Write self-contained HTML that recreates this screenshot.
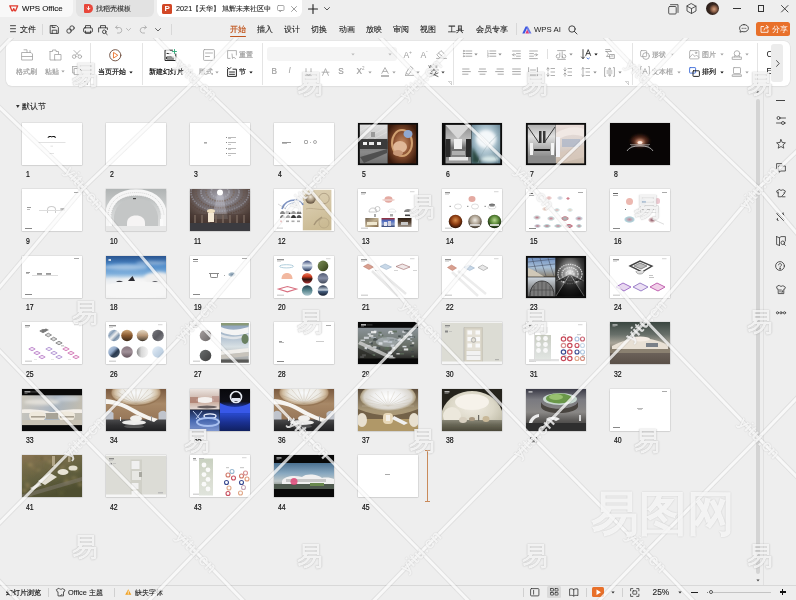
<!DOCTYPE html><html><head><meta charset="utf-8"><style>
*{margin:0;padding:0;box-sizing:border-box}
html,body{width:796px;height:600px;overflow:hidden;background:#eeeeee;font-family:"Liberation Sans",sans-serif;color:#222}
.a{position:absolute}
.t{position:absolute;white-space:nowrap;line-height:1}
.k{-webkit-text-stroke:0.2px currentColor}
.k1{-webkit-text-stroke:0.1px currentColor}
svg{position:absolute;overflow:visible}
.s{position:absolute;width:60px;height:42px;background:#fff;box-shadow:0 0 0 .5px rgba(0,0,0,.10),0 .5px 1.5px rgba(0,0,0,.18);overflow:hidden}
.n{position:absolute;font-size:8.2px;line-height:1;color:#111;-webkit-text-stroke:0.2px #111;transform:scaleX(.84);transform-origin:0 0}
.g{color:#9a9a9a}
</style></head><body><div class="a" style="left:0;top:0;width:796px;height:600px;will-change:transform;overflow:hidden"><div class="a" style="left:0px;top:0px;width:73px;height:17px;background:#f8f8f8;border-radius:0 0 6px 0"></div><div class="a" style="left:76px;top:0px;width:78px;height:17px;background:#e2e2e2;border-radius:0 0 6px 6px"></div><div class="a" style="left:157px;top:0px;width:145px;height:17px;background:#ffffff;border-radius:0 0 6px 6px"></div><svg style="left:8.5px;top:5px" width="9.5" height="6.5" viewBox="0 0 9.5 6.5" fill="none" stroke="#e03a2e" stroke-width="0.9" stroke-linecap="round" stroke-linejoin="round"><path d="M0.8 0.8 H8.7 L6.6 5.8 H5.7 L4.75 3.6 L3.8 5.8 H2.9 Z" stroke="#e03a2e" stroke-width="1.3" fill="none"/></svg><div class="t k1" style="left:22px;top:4.9px;font-size:7.9px;color:#111;">WPS Office</div><div class="a" style="left:84px;top:4px;width:8.5px;height:9px;background:#e8463a;border-radius:1px 4.5px 4.5px 1px"></div><svg style="left:85.5px;top:6px" width="5" height="5" viewBox="0 0 5 5" fill="none" stroke="#fff" stroke-width="0.9" stroke-linecap="round" stroke-linejoin="round"><path d="M2.5 0.5 V3.5 M1 2.2 L2.5 3.7 L4 2.2" /></svg><div class="t k1" style="left:96.4px;top:5.2px;font-size:7.3px;color:#333;">找稻壳模板</div><div class="a" style="left:162px;top:4px;width:10px;height:10px;background:#d24726;border-radius:1.5px"></div><div class="t " style="left:164.5px;top:5px;font-size:8px;color:#fff;font-weight:bold">P</div><div class="t k1" style="left:176px;top:5.0px;font-size:7.3px;color:#222;">2021【天华】 旭辉未来社区中</div><div class="a" style="left:270px;top:3px;width:12px;height:12px;background:linear-gradient(90deg,rgba(255,255,255,0),#fff 40%)"></div><svg style="left:277px;top:5.2px" width="8" height="7" viewBox="0 0 8 7" fill="none" stroke="#888" stroke-width="0.7" stroke-linecap="round" stroke-linejoin="round"><rect x="0.5" y="0.5" width="6.5" height="5" rx="1"/><path d="M2.5 5.5 L3 6.8 L4.5 5.5"/></svg><svg style="left:290.5px;top:5.8px" width="6" height="6" viewBox="0 0 6 6" fill="none" stroke="#888" stroke-width="0.8" stroke-linecap="round" stroke-linejoin="round"><path d="M0.5 0.5 L5.5 5.5 M5.5 0.5 L0.5 5.5"/></svg><svg style="left:308px;top:3.5px" width="10" height="10" viewBox="0 0 10 10" fill="none" stroke="#222" stroke-width="1.1" stroke-linecap="round" stroke-linejoin="round"><path d="M5 0.5 V9.5 M0.5 5 H9.5"/></svg><svg style="left:324px;top:7px" width="6" height="4" viewBox="0 0 6 4" fill="none" stroke="#444" stroke-width="0.9" stroke-linecap="round" stroke-linejoin="round"><path d="M0.5 0.5 L3 3 L5.5 0.5"/></svg><svg style="left:667.5px;top:3.5px" width="11" height="11" viewBox="0 0 11 11" fill="none" stroke="#444" stroke-width="0.9" stroke-linecap="round" stroke-linejoin="round"><rect x="0.7" y="2.5" width="7.5" height="7.5" rx="1"/><path d="M2.5 0.7 H10 V8.5"/></svg><svg style="left:686px;top:3px" width="11" height="11" viewBox="0 0 11 11" fill="none" stroke="#444" stroke-width="0.9" stroke-linecap="round" stroke-linejoin="round"><path d="M5.5 0.7 L10 3.2 V8 L5.5 10.5 L1 8 V3.2 Z M1 3.2 L5.5 5.6 L10 3.2 M5.5 5.6 V10.5"/></svg><div class="a" style="left:705.8px;top:2.2px;width:13.2px;height:13.2px;border-radius:50%;background:radial-gradient(circle at 62% 55%,#d0a080 0,#9a6a50 22%,#3a2820 45%,#241a16 80%)"></div><div class="a" style="left:733px;top:7.6px;width:7.5px;height:0.9px;background:#333"></div><div class="a" style="left:757.8px;top:5px;width:6.5px;height:6.5px;border:0.9px solid #333"></div><svg style="left:781.2px;top:4.8px" width="7.5" height="7.5" viewBox="0 0 7.5 7.5" fill="none" stroke="#333" stroke-width="0.9" stroke-linecap="round" stroke-linejoin="round"><path d="M0.5 0.5 L7 7 M7 0.5 L0.5 7"/></svg><svg style="left:10px;top:25px" width="6" height="8" viewBox="0 0 6 8" fill="none" stroke="#333" stroke-width="0.9" stroke-linecap="round" stroke-linejoin="round"><path d="M0.5 0.7 H5.5 M0.5 3.7 H5.5 M0.5 6.7 H5.5"/></svg><div class="t k1" style="left:20px;top:25.8px;font-size:7.5px;color:#222;">文件</div><div class="a" style="left:42px;top:24px;width:1px;height:11px;background:#d8d8d8"></div><svg style="left:50px;top:25px" width="9" height="9" viewBox="0 0 9 9" fill="none" stroke="#333" stroke-width="0.85" stroke-linecap="round" stroke-linejoin="round"><path d="M0.6 0.6 H6.5 L8.4 2.5 V8.4 H0.6 Z M2.2 8.4 V5.2 H6.8 V8.4 M2.2 0.6 V2.5 H5"/></svg><svg style="left:66px;top:25px" width="9" height="9" viewBox="0 0 9 9" fill="none" stroke="#333" stroke-width="0.85" stroke-linecap="round" stroke-linejoin="round"><circle cx="6" cy="3" r="2.2"/><circle cx="3" cy="6" r="2.2"/></svg><svg style="left:83px;top:25px" width="10" height="9" viewBox="0 0 10 9" fill="none" stroke="#333" stroke-width="0.85" stroke-linecap="round" stroke-linejoin="round"><rect x="0.6" y="2.8" width="8.8" height="4.5" rx="1.2"/><path d="M2.5 2.8 V0.6 H7.5 V2.8 M2.5 6 V8.4 H7.5 V6"/></svg><svg style="left:98px;top:25px" width="10" height="10" viewBox="0 0 10 10" fill="none" stroke="#333" stroke-width="0.85" stroke-linecap="round" stroke-linejoin="round"><path d="M2.5 2.8 V0.6 H7.5 V2.8 M0.6 7 V2.8 H9.4 V4.5"/><circle cx="6.3" cy="6.8" r="1.8"/><path d="M7.6 8.1 L9.2 9.6"/></svg><svg style="left:115px;top:25px" width="8" height="9" viewBox="0 0 8 9" fill="none" stroke="#aaa" stroke-width="0.85" stroke-linecap="round" stroke-linejoin="round"><path d="M2 0.8 L0.6 2.5 L2.5 3.8 M0.8 2.5 H4.5 A2.8 2.8 0 0 1 4.5 8 H2.5"/></svg><svg style="left:126px;top:28px" width="5" height="3" viewBox="0 0 5 3" fill="none" stroke="#aaa" stroke-width="0.8" stroke-linecap="round" stroke-linejoin="round"><path d="M0.5 0.5 L2.5 2.5 L4.5 0.5"/></svg><svg style="left:139px;top:25px" width="8" height="9" viewBox="0 0 8 9" fill="none" stroke="#aaa" stroke-width="0.85" stroke-linecap="round" stroke-linejoin="round"><path d="M6 0.8 L7.4 2.5 L5.5 3.8 M7.2 2.5 H3.5 A2.8 2.8 0 0 0 3.5 8 H5.5"/></svg><svg style="left:155px;top:28px" width="6" height="4" viewBox="0 0 6 4" fill="none" stroke="#555" stroke-width="0.9" stroke-linecap="round" stroke-linejoin="round"><path d="M0.5 0.5 L3 3 L5.5 0.5"/></svg><div class="a" style="left:170.5px;top:24px;width:0.8px;height:11px;background:#d8d8d8"></div><div class="t k" style="left:229.5px;top:26.2px;font-size:7.8px;color:#c0561f;">开始</div><div class="t k1" style="left:257px;top:26.2px;font-size:7.8px;color:#222;">插入</div><div class="t k1" style="left:284px;top:26.2px;font-size:7.8px;color:#222;">设计</div><div class="t k1" style="left:311px;top:26.2px;font-size:7.8px;color:#222;">切换</div><div class="t k1" style="left:338.6px;top:26.2px;font-size:7.8px;color:#222;">动画</div><div class="t k1" style="left:366px;top:26.2px;font-size:7.8px;color:#222;">放映</div><div class="t k1" style="left:393px;top:26.2px;font-size:7.8px;color:#222;">审阅</div><div class="t k1" style="left:420px;top:26.2px;font-size:7.8px;color:#222;">视图</div><div class="t k1" style="left:448px;top:26.2px;font-size:7.8px;color:#222;">工具</div><div class="t k1" style="left:476px;top:26.2px;font-size:7.8px;color:#222;">会员专享</div><div class="a" style="left:229.5px;top:36px;width:16px;height:1.3px;background:#c0561f;border-radius:1px"></div><div class="a" style="left:516px;top:23px;width:1px;height:12px;background:#d8d8d8"></div><svg style="left:522px;top:25.8px" width="10" height="8" viewBox="0 0 10 8" fill="none" stroke="none" stroke-width="0.9" stroke-linecap="round" stroke-linejoin="round"><path d="M0.3 7.6 L3.6 0.4 H5.8 L2.6 7.6 Z" fill="#3a56e0" stroke="none"/><path d="M5.2 3.6 L7.2 7.6 H3.4 Z" fill="#e03a78" stroke="none"/><path d="M5.8 0.4 L9.5 7.6 H7.4 L4.6 2.3 Z" fill="#5a6ae8" stroke="none" opacity=".9"/></svg><div class="t " style="left:534px;top:26.0px;font-size:7.8px;color:#222;">WPS AI</div><svg style="left:568px;top:25px" width="10" height="10" viewBox="0 0 10 10" fill="none" stroke="#333" stroke-width="0.9" stroke-linecap="round" stroke-linejoin="round"><circle cx="4" cy="4" r="3.2"/><path d="M6.3 6.3 L9 9"/></svg><svg style="left:739px;top:24.2px" width="10" height="8.5" viewBox="0 0 10 8.5" fill="none" stroke="#333" stroke-width="0.85" stroke-linecap="round" stroke-linejoin="round"><path d="M5 0.6 C7.6 0.6 9.4 2.2 9.4 4.2 C9.4 6.2 7.6 7.8 5 7.8 C4.3 7.8 3.6 7.7 3 7.5 L1 8.2 L1.4 6.6 C0.9 6 0.6 5.1 0.6 4.2 C0.6 2.2 2.4 0.6 5 0.6 Z"/><circle cx="3.2" cy="4.2" r=".55" fill="#333" stroke="none"/><circle cx="5" cy="4.2" r=".55" fill="#333" stroke="none"/><circle cx="6.8" cy="4.2" r=".55" fill="#333" stroke="none"/></svg><div class="a" style="left:755.5px;top:22px;width:34px;height:14px;background:#e8702a;border-radius:2.5px"></div><svg style="left:760px;top:25px" width="9" height="8" viewBox="0 0 9 8" fill="none" stroke="#fff" stroke-width="0.85" stroke-linecap="round" stroke-linejoin="round"><path d="M3.5 1.5 H1 V7.3 H8 V5 M4 5 C4.5 3 6 2 8 2 M6.5 0.5 L8.3 2 L6.8 3.8"/></svg><div class="t " style="left:771.5px;top:25.5px;font-size:7.6px;color:#fff;">分享</div><div class="a" style="left:5.5px;top:40.5px;width:784px;height:45.5px;background:#fff;border-radius:6px;box-shadow:0 0 0 .6px #dedede,0 1px 1.5px rgba(0,0,0,.06)"></div><svg style="left:21px;top:49px" width="13" height="12" viewBox="0 0 13 12" fill="none" stroke="#a0a0a0" stroke-width="0.8" stroke-linecap="round" stroke-linejoin="round"><path d="M3 0.8 H6 V3.5 M1 3.5 H10 L11.5 5 V11 H1 Z M9 3.5 V1.5"/><path d="M1 7.5 H11.5"/></svg><div class="t k" style="left:16.3px;top:68.3px;font-size:7.2px;color:#a0a0a0;">格式刷</div><svg style="left:49px;top:49px" width="13" height="12" viewBox="0 0 13 12" fill="none" stroke="#a0a0a0" stroke-width="0.8" stroke-linecap="round" stroke-linejoin="round"><path d="M1 2.5 H3.5 V1 H7 V2.5 H9.5 V5 M1 2.5 V11 H6 M6 5.5 H12 V11 H6 Z"/></svg><div class="t k" style="left:45px;top:68.3px;font-size:7.2px;color:#a0a0a0;">粘贴</div><svg style="left:61.3px;top:70.3px" width="4" height="3" viewBox="0 0 4 3" fill="none" stroke="none" stroke-width="0.9" stroke-linecap="round" stroke-linejoin="round"><path d="M0.3 0.5 H3.7 L2 2.5 Z" fill="#a0a0a0" stroke="none"/></svg><svg style="left:72px;top:50px" width="10" height="9" viewBox="0 0 10 9" fill="none" stroke="#a0a0a0" stroke-width="0.8" stroke-linecap="round" stroke-linejoin="round"><circle cx="2.2" cy="6.6" r="1.8"/><circle cx="7.8" cy="6.6" r="1.8"/><path d="M3.3 5.2 L8 0.5 M6.7 5.2 L2 0.5"/></svg><svg style="left:72px;top:66px" width="10" height="9" viewBox="0 0 10 9" fill="none" stroke="#a0a0a0" stroke-width="0.8" stroke-linecap="round" stroke-linejoin="round"><path d="M0.6 0.6 H6 V2.5 M0.6 0.6 V7 H2.5 M2.5 2.5 H7.5 L9.4 4.4 V8.6 H2.5 Z"/></svg><svg style="left:84px;top:80.5px" width="4" height="4" viewBox="0 0 4 4" fill="none" stroke="#aaa" stroke-width="0.5" stroke-linecap="round" stroke-linejoin="round"><path d="M0.5 0.5 H3.5 V3.5 M3.5 3.5 L1 1"/></svg><div class="a" style="left:89.5px;top:43px;width:0.8px;height:42px;background:#e4e4e4"></div><svg style="left:109px;top:48.5px" width="12.5" height="12.5" viewBox="0 0 12.5 12.5" fill="none" stroke="#6a4a3a" stroke-width="0.9" stroke-linecap="round" stroke-linejoin="round"><circle cx="6.25" cy="6.25" r="5.6" stroke="#6a4a3a"/><path d="M4.8 3.6 L8.8 6.25 L4.8 8.9 Z" stroke="#e8702a"/></svg><div class="t k" style="left:98px;top:68.3px;font-size:7.2px;color:#111;">当页开始</div><svg style="left:128.5px;top:70.5px" width="4" height="3" viewBox="0 0 4 3" fill="none" stroke="none" stroke-width="0.9" stroke-linecap="round" stroke-linejoin="round"><path d="M0.3 0.5 H3.7 L2 2.5 Z" fill="#111" stroke="none"/></svg><div class="a" style="left:141.7px;top:43px;width:0.8px;height:42px;background:#e4e4e4"></div><svg style="left:164px;top:48.5px" width="13" height="12.5" viewBox="0 0 13 12.5" fill="none" stroke="#111" stroke-width="0.9" stroke-linecap="round" stroke-linejoin="round"><path d="M8.5 1.2 H1 V11.5 H11.8 V5"/><path d="M3 4.5 H7 M3 8 H9.8 V10 H3 Z"/><path d="M10.5 0.5 V4.5 M8.5 2.5 H12.5" stroke="#2aa876"/></svg><div class="t k" style="left:148.7px;top:68.3px;font-size:7.2px;color:#111;">新建幻灯片</div><svg style="left:188.0px;top:70.5px" width="4" height="3" viewBox="0 0 4 3" fill="none" stroke="none" stroke-width="0.9" stroke-linecap="round" stroke-linejoin="round"><path d="M0.3 0.5 H3.7 L2 2.5 Z" fill="#111" stroke="none"/></svg><svg style="left:203px;top:49px" width="12" height="12" viewBox="0 0 12 12" fill="none" stroke="#a0a0a0" stroke-width="0.8" stroke-linecap="round" stroke-linejoin="round"><rect x="0.6" y="0.6" width="10.8" height="10.8" rx="0.8"/><path d="M2.5 4 H9.5 M2.5 7.5 H6.5"/></svg><div class="t k" style="left:198.9px;top:68.3px;font-size:7.2px;color:#a0a0a0;">版式</div><svg style="left:215.3px;top:70.5px" width="4" height="3" viewBox="0 0 4 3" fill="none" stroke="none" stroke-width="0.9" stroke-linecap="round" stroke-linejoin="round"><path d="M0.3 0.5 H3.7 L2 2.5 Z" fill="#a0a0a0" stroke="none"/></svg><svg style="left:227px;top:50px" width="10" height="9" viewBox="0 0 10 9" fill="none" stroke="#a0a0a0" stroke-width="0.8" stroke-linecap="round" stroke-linejoin="round"><path d="M3 8.4 H0.6 V0.6 H9.4 V5 M5 4 L5.5 8.5 L6.8 7 L8.5 8.7"/></svg><div class="t k" style="left:239.3px;top:50.8px;font-size:7.2px;color:#a0a0a0;">重置</div><svg style="left:227px;top:66.5px" width="10" height="10" viewBox="0 0 10 10" fill="none" stroke="#111" stroke-width="0.9" stroke-linecap="round" stroke-linejoin="round"><path d="M0.6 0.6 L2.2 2.2 L3.8 0.6 M0.6 2.2 V9.4 H9.4 V2.2 H6 M2.5 5 H7.5 M2.5 7.3 H7.5"/></svg><div class="t k" style="left:239.3px;top:68.3px;font-size:7.2px;color:#111;">节</div><svg style="left:248.5px;top:70.5px" width="4" height="3" viewBox="0 0 4 3" fill="none" stroke="none" stroke-width="0.9" stroke-linecap="round" stroke-linejoin="round"><path d="M0.3 0.5 H3.7 L2 2.5 Z" fill="#111" stroke="none"/></svg><div class="a" style="left:262.2px;top:43px;width:0.8px;height:42px;background:#e4e4e4"></div><div class="a" style="left:267px;top:47px;width:92.5px;height:14px;background:#f4f4f4;border-radius:3px 0 0 3px"></div><div class="a" style="left:360px;top:47px;width:37px;height:14px;background:#f4f4f4;border-radius:0 3px 3px 0"></div><svg style="left:351.3px;top:53.3px" width="4" height="3" viewBox="0 0 4 3" fill="none" stroke="none" stroke-width="0.9" stroke-linecap="round" stroke-linejoin="round"><path d="M0.3 0.5 H3.7 L2 2.5 Z" fill="#bbb" stroke="none"/></svg><svg style="left:388.0px;top:53.3px" width="4" height="3" viewBox="0 0 4 3" fill="none" stroke="none" stroke-width="0.9" stroke-linecap="round" stroke-linejoin="round"><path d="M0.3 0.5 H3.7 L2 2.5 Z" fill="#bbb" stroke="none"/></svg><div class="t k" style="left:271.5px;top:68.3px;font-size:8.2px;color:#a0a0a0;">B</div><div class="t " style="left:288.5px;top:67.3px;font-size:8.2px;color:#a0a0a0;font-style:italic;font-family:"Liberation Serif",serif">I</div><svg style="left:305px;top:67.5px" width="7" height="9" viewBox="0 0 7 9" fill="none" stroke="#a0a0a0" stroke-width="0.8" stroke-linecap="round" stroke-linejoin="round"><path d="M1 0.6 V4.5 A2.5 2.5 0 0 0 6 4.5 V0.6 M0.6 8 H6.4"/></svg><svg style="left:321.5px;top:67.5px" width="7" height="8" viewBox="0 0 7 8" fill="none" stroke="#a0a0a0" stroke-width="0.8" stroke-linecap="round" stroke-linejoin="round"><path d="M0.6 7.4 L3.5 0.6 L6.4 7.4 M0 4.2 H7"/></svg><div class="t k" style="left:338.3px;top:68.3px;font-size:8.2px;color:#a0a0a0;">S</div><div class="t k" style="left:356.4px;top:68.3px;font-size:8.2px;color:#a0a0a0;">X</div><div class="t " style="left:362px;top:66.5px;font-size:4.5px;color:#a0a0a0;">2</div><svg style="left:368.3px;top:70.5px" width="4" height="3" viewBox="0 0 4 3" fill="none" stroke="none" stroke-width="0.9" stroke-linecap="round" stroke-linejoin="round"><path d="M0.3 0.5 H3.7 L2 2.5 Z" fill="#a0a0a0" stroke="none"/></svg><svg style="left:381px;top:67px" width="8" height="10" viewBox="0 0 8 10" fill="none" stroke="#a0a0a0" stroke-width="0.8" stroke-linecap="round" stroke-linejoin="round"><path d="M0.8 6.4 L4 0.6 L7.2 6.4 M2 4.4 H6"/></svg><div class="a" style="left:380.5px;top:74.5px;width:8.5px;height:2px;background:#b8b8b8"></div><svg style="left:392.0px;top:70.5px" width="4" height="3" viewBox="0 0 4 3" fill="none" stroke="none" stroke-width="0.9" stroke-linecap="round" stroke-linejoin="round"><path d="M0.3 0.5 H3.7 L2 2.5 Z" fill="#a0a0a0" stroke="none"/></svg><div class="t " style="left:403.5px;top:50.8px;font-size:8.6px;color:#a0a0a0;">A</div><div class="t " style="left:409px;top:49.5px;font-size:5px;color:#a0a0a0;">+</div><div class="t " style="left:420.5px;top:50.8px;font-size:8.6px;color:#a0a0a0;">A</div><div class="t " style="left:426px;top:48.5px;font-size:5px;color:#a0a0a0;">-</div><svg style="left:436px;top:50px" width="11" height="9" viewBox="0 0 11 9" fill="none" stroke="#a0a0a0" stroke-width="0.8" stroke-linecap="round" stroke-linejoin="round"><path d="M3.5 7.5 L0.8 4.8 L5 0.6 L9.5 5 L7 7.5 Z M2.6 3.2 L7.3 7.3 M0.5 8.4 H10.5"/></svg><svg style="left:404.5px;top:66px" width="9" height="10" viewBox="0 0 9 10" fill="none" stroke="#a0a0a0" stroke-width="0.8" stroke-linecap="round" stroke-linejoin="round"><path d="M1 7 L4 2 L7 4 L4 8 Z M4 2 L5.5 0.5 L8 2.5 L7 4 M0.6 9.4 H8.4 M0.6 8.5 V9.4"/></svg><svg style="left:416.0px;top:70.5px" width="4" height="3" viewBox="0 0 4 3" fill="none" stroke="none" stroke-width="0.9" stroke-linecap="round" stroke-linejoin="round"><path d="M0.3 0.5 H3.7 L2 2.5 Z" fill="#a0a0a0" stroke="none"/></svg><div class="t " style="left:428.5px;top:64.5px;font-size:4.8px;color:#444;">wén</div><svg style="left:428.5px;top:67.5px" width="10" height="9" viewBox="0 0 10 9" fill="none" stroke="#444" stroke-width="0.8" stroke-linecap="round" stroke-linejoin="round"><path d="M5 0.5 V2 M1 2 H9 M2.5 3 L4 5.5 M7.5 3 L6 5.5 M1 8.5 L9 5 M1 5 L9 8.5"/></svg><svg style="left:440.5px;top:70.5px" width="4" height="3" viewBox="0 0 4 3" fill="none" stroke="none" stroke-width="0.9" stroke-linecap="round" stroke-linejoin="round"><path d="M0.3 0.5 H3.7 L2 2.5 Z" fill="#444" stroke="none"/></svg><svg style="left:447.5px;top:80.5px" width="4" height="4" viewBox="0 0 4 4" fill="none" stroke="#aaa" stroke-width="0.5" stroke-linecap="round" stroke-linejoin="round"><path d="M0.5 0.5 H3.5 V3.5 M3.5 3.5 L1 1"/></svg><div class="a" style="left:453.4px;top:43px;width:0.8px;height:42px;background:#e4e4e4"></div><svg style="left:462.7px;top:50px" width="9" height="9" viewBox="0 0 9 9" fill="none" stroke="#8c8c8c" stroke-width="0.75" stroke-linecap="round" stroke-linejoin="round"><path d="M2.8 1.0 H8.8"/><path d="M2.8 3.6 H8.8"/><path d="M2.8 6.2 H8.8"/></svg><svg style="left:462.5px;top:50px" width="2" height="9" viewBox="0 0 2 9" fill="none" stroke="#8c8c8c" stroke-width="0.7" stroke-linecap="round" stroke-linejoin="round"><circle cx="0.8" cy="1" r=".5"/><circle cx="0.8" cy="3.6" r=".5"/><circle cx="0.8" cy="6.2" r=".5"/></svg><svg style="left:474.3px;top:53.3px" width="4" height="3" viewBox="0 0 4 3" fill="none" stroke="none" stroke-width="0.9" stroke-linecap="round" stroke-linejoin="round"><path d="M0.3 0.5 H3.7 L2 2.5 Z" fill="#8c8c8c" stroke="none"/></svg><svg style="left:487px;top:50px" width="9" height="9" viewBox="0 0 9 9" fill="none" stroke="#8c8c8c" stroke-width="0.75" stroke-linecap="round" stroke-linejoin="round"><path d="M2.8 1.0 H8.8"/><path d="M2.8 3.6 H8.8"/><path d="M2.8 6.2 H8.8"/></svg><svg style="left:486.6px;top:49.8px" width="2" height="9" viewBox="0 0 2 9" fill="none" stroke="#8c8c8c" stroke-width="0.5" stroke-linecap="round" stroke-linejoin="round"><path d="M0.8 0.4 V2 M0.5 3 H1.3 V4.3 H0.5 M0.5 5.5 H1.3 V7 H0.5"/></svg><svg style="left:498.3px;top:53.3px" width="4" height="3" viewBox="0 0 4 3" fill="none" stroke="none" stroke-width="0.9" stroke-linecap="round" stroke-linejoin="round"><path d="M0.3 0.5 H3.7 L2 2.5 Z" fill="#8c8c8c" stroke="none"/></svg><svg style="left:512px;top:50px" width="9" height="9" viewBox="0 0 9 9" fill="none" stroke="#8c8c8c" stroke-width="0.7" stroke-linecap="round" stroke-linejoin="round"><path d="M0.6 1 H8.4 M4.5 3.6 H8.4 M4.5 6.2 H8.4 M0.6 8.6 H8.4 M3.5 4.8 H0.6 L1.8 3.6 M0.6 4.8 L1.8 6"/></svg><svg style="left:528.8px;top:50px" width="9" height="9" viewBox="0 0 9 9" fill="none" stroke="#8c8c8c" stroke-width="0.7" stroke-linecap="round" stroke-linejoin="round"><path d="M0.6 1 H8.4 M0.6 3.6 H4.5 M0.6 6.2 H4.5 M0.6 8.6 H8.4 M5.5 4.8 H8.4 L7.2 3.6 M8.4 4.8 L7.2 6"/></svg><div class="a" style="left:547.3px;top:49.4px;width:0.8px;height:9.6px;background:#e0e0e0"></div><svg style="left:557px;top:49.5px" width="9" height="10" viewBox="0 0 9 10" fill="none" stroke="#8c8c8c" stroke-width="0.7" stroke-linecap="round" stroke-linejoin="round"><path d="M0.6 0.6 H8.4 M0.6 9.4 H8.4"/><path d="M1 4.5 A1.8 1.8 0 1 0 2.8 6.3 V3 M5.2 1.8 V8 M5.2 6.3 A1.8 1.8 0 1 0 7 4.5"/></svg><svg style="left:568.5px;top:53.3px" width="4" height="3" viewBox="0 0 4 3" fill="none" stroke="none" stroke-width="0.9" stroke-linecap="round" stroke-linejoin="round"><path d="M0.3 0.5 H3.7 L2 2.5 Z" fill="#8c8c8c" stroke="none"/></svg><svg style="left:580.5px;top:49px" width="11" height="11" viewBox="0 0 11 11" fill="none" stroke="#111" stroke-width="0.9" stroke-linecap="round" stroke-linejoin="round"><path d="M2 0.6 V9.5 M0.5 8 L2 9.6 L3.5 8 M4.8 6.5 L7.2 0.6 L9.6 6.5 M5.6 4.6 H8.8" stroke="#333"/><path d="M6 9 L7.2 10 L8.4 9" stroke="#3a6ad8"/></svg><svg style="left:593.5px;top:53.3px" width="4" height="3" viewBox="0 0 4 3" fill="none" stroke="none" stroke-width="0.9" stroke-linecap="round" stroke-linejoin="round"><path d="M0.3 0.5 H3.7 L2 2.5 Z" fill="#111" stroke="none"/></svg><svg style="left:605.3px;top:49.4px" width="10" height="10" viewBox="0 0 10 10" fill="none" stroke="#8c8c8c" stroke-width="0.7" stroke-linecap="round" stroke-linejoin="round"><path d="M0.6 0.6 H5 L6.5 2.5 H0.6 M1.5 2.5 L3.5 5 L1.5 7.5 H5 M5 5.5 H9.4 V9.4 H5 Z M6.5 7 H8"/></svg><svg style="left:461.5px;top:67.5px" width="9" height="9" viewBox="0 0 9 9" fill="none" stroke="#8c8c8c" stroke-width="0.75" stroke-linecap="round" stroke-linejoin="round"><path d="M0.6 1.0 H7"/><path d="M0.6 3.6 H8.4"/><path d="M0.6 6.2 H6"/></svg><svg style="left:478px;top:67.5px" width="9" height="9" viewBox="0 0 9 9" fill="none" stroke="#8c8c8c" stroke-width="0.75" stroke-linecap="round" stroke-linejoin="round"><path d="M1.5 1.0 H7.5"/><path d="M0.6 3.6 H8.4"/><path d="M2 6.2 H7"/></svg><svg style="left:495px;top:67.5px" width="9" height="9" viewBox="0 0 9 9" fill="none" stroke="#8c8c8c" stroke-width="0.75" stroke-linecap="round" stroke-linejoin="round"><path d="M2 1.0 H8.4"/><path d="M0.6 3.6 H8.4"/><path d="M3 6.2 H8.4"/></svg><svg style="left:512px;top:67.5px" width="9" height="9" viewBox="0 0 9 9" fill="none" stroke="#8c8c8c" stroke-width="0.75" stroke-linecap="round" stroke-linejoin="round"><path d="M0.6 1.0 H8.4"/><path d="M0.6 3.6 H8.4"/><path d="M0.6 6.2 H8.4"/></svg><svg style="left:528.4px;top:66.5px" width="10" height="10" viewBox="0 0 10 10" fill="none" stroke="#8c8c8c" stroke-width="0.7" stroke-linecap="round" stroke-linejoin="round"><path d="M0.6 0.6 V9.4 M9.4 0.6 V9.4 M2.5 3 H7.5 M2.5 5.5 H7.5 M2.5 8 H7.5 M1.5 9.4 H8.5"/></svg><svg style="left:546.4px;top:66.5px" width="9" height="10" viewBox="0 0 9 10" fill="none" stroke="#8c8c8c" stroke-width="0.7" stroke-linecap="round" stroke-linejoin="round"><path d="M2 0.8 V4 M0.8 2 L2 0.8 L3.2 2 M2 6 V9.2 M0.8 8 L2 9.2 L3.2 8 M5 1.5 H8.6 M5 5 H8.6 M5 8.5 H8.6"/></svg><svg style="left:563px;top:66.5px" width="9" height="10" viewBox="0 0 9 10" fill="none" stroke="#8c8c8c" stroke-width="0.7" stroke-linecap="round" stroke-linejoin="round"><path d="M2 0.8 V4 M0.8 2.8 L2 4 L3.2 2.8 M2 6 V9.2 M0.8 7.2 L2 6 L3.2 7.2 M5 1.5 H8.6 M5 5 H8.6 M5 8.5 H8.6"/></svg><svg style="left:580.7px;top:66.5px" width="9" height="10" viewBox="0 0 9 10" fill="none" stroke="#8c8c8c" stroke-width="0.7" stroke-linecap="round" stroke-linejoin="round"><path d="M2 0.6 V9.4 M0.8 1.8 L2 0.6 L3.2 1.8 M0.8 8.2 L2 9.4 L3.2 8.2 M5 1.5 H8.6 M5 5 H8.6 M5 8.5 H8.6"/></svg><svg style="left:593.3px;top:70.5px" width="4" height="3" viewBox="0 0 4 3" fill="none" stroke="none" stroke-width="0.9" stroke-linecap="round" stroke-linejoin="round"><path d="M0.3 0.5 H3.7 L2 2.5 Z" fill="#8c8c8c" stroke="none"/></svg><svg style="left:604.4px;top:66.5px" width="11" height="10" viewBox="0 0 11 10" fill="none" stroke="#8c8c8c" stroke-width="0.7" stroke-linecap="round" stroke-linejoin="round"><path d="M1.5 0.6 H0.6 V9.4 H1.5 M9.5 0.6 H10.4 V9.4 H9.5 M3 4 H8 M3 6 H8 M5.5 1 L4.5 2.2 H6.5 Z M5.5 9 L4.5 7.8 H6.5 Z"/></svg><svg style="left:618.3px;top:70.5px" width="4" height="3" viewBox="0 0 4 3" fill="none" stroke="none" stroke-width="0.9" stroke-linecap="round" stroke-linejoin="round"><path d="M0.3 0.5 H3.7 L2 2.5 Z" fill="#8c8c8c" stroke="none"/></svg><svg style="left:624.8px;top:80.5px" width="4" height="4" viewBox="0 0 4 4" fill="none" stroke="#aaa" stroke-width="0.5" stroke-linecap="round" stroke-linejoin="round"><path d="M0.5 0.5 H3.5 V3.5 M3.5 3.5 L1 1"/></svg><div class="a" style="left:632px;top:43px;width:0.8px;height:42px;background:#e4e4e4"></div><svg style="left:640px;top:49.5px" width="10" height="10" viewBox="0 0 10 10" fill="none" stroke="#a0a0a0" stroke-width="0.8" stroke-linecap="round" stroke-linejoin="round"><rect x="0.6" y="0.6" width="6" height="6" rx="0.8"/><circle cx="6" cy="6" r="3.4"/></svg><div class="t k" style="left:651.9px;top:51px;font-size:7.2px;color:#a0a0a0;">形状</div><svg style="left:670.0px;top:53.3px" width="4" height="3" viewBox="0 0 4 3" fill="none" stroke="none" stroke-width="0.9" stroke-linecap="round" stroke-linejoin="round"><path d="M0.3 0.5 H3.7 L2 2.5 Z" fill="#a0a0a0" stroke="none"/></svg><svg style="left:640px;top:66px" width="10" height="10" viewBox="0 0 10 10" fill="none" stroke="#a0a0a0" stroke-width="0.7" stroke-linecap="round" stroke-linejoin="round"><path d="M1.5 0.6 H0.6 V9.4 H1.5 M8.5 0.6 H9.4 V9.4 H8.5 M2.8 7.5 L5 2.5 L7.2 7.5 M3.6 5.6 H6.4"/></svg><div class="t k" style="left:651.9px;top:68.3px;font-size:7.2px;color:#a0a0a0;">文本框</div><svg style="left:677.3px;top:70.5px" width="4" height="3" viewBox="0 0 4 3" fill="none" stroke="none" stroke-width="0.9" stroke-linecap="round" stroke-linejoin="round"><path d="M0.3 0.5 H3.7 L2 2.5 Z" fill="#a0a0a0" stroke="none"/></svg><svg style="left:689.4px;top:49.5px" width="10.5" height="9.5" viewBox="0 0 10.5 9.5" fill="none" stroke="#a0a0a0" stroke-width="0.75" stroke-linecap="round" stroke-linejoin="round"><rect x="0.6" y="0.6" width="9.3" height="8.3" rx="0.8"/><path d="M0.6 7.5 L3.5 4.2 L6 6.5 L7.5 5 L9.9 7.5"/><circle cx="7" cy="2.8" r=".8"/></svg><div class="t k" style="left:702px;top:51px;font-size:7.2px;color:#a0a0a0;">图片</div><svg style="left:719.5px;top:53.3px" width="4" height="3" viewBox="0 0 4 3" fill="none" stroke="none" stroke-width="0.9" stroke-linecap="round" stroke-linejoin="round"><path d="M0.3 0.5 H3.7 L2 2.5 Z" fill="#a0a0a0" stroke="none"/></svg><svg style="left:689.4px;top:66.5px" width="11" height="10" viewBox="0 0 11 10" fill="none" stroke="#111" stroke-width="0.9" stroke-linecap="round" stroke-linejoin="round"><rect x="0.6" y="0.6" width="6" height="5.5" rx="0.6" stroke="#3a6ad8"/><rect x="4" y="3.8" width="6.4" height="5.6" rx="0.6"/></svg><div class="t k" style="left:702px;top:68.3px;font-size:7.2px;color:#111;">排列</div><svg style="left:719.5px;top:70.5px" width="4" height="3" viewBox="0 0 4 3" fill="none" stroke="none" stroke-width="0.9" stroke-linecap="round" stroke-linejoin="round"><path d="M0.3 0.5 H3.7 L2 2.5 Z" fill="#111" stroke="none"/></svg><svg style="left:732.2px;top:49.5px" width="10" height="10" viewBox="0 0 10 10" fill="none" stroke="#a0a0a0" stroke-width="0.8" stroke-linecap="round" stroke-linejoin="round"><circle cx="5" cy="3.5" r="2.8"/><path d="M0.6 7 H9.4 V9.4 H0.6 Z M2.5 7 L3 5.5 M7.5 7 L7 5.5"/></svg><svg style="left:744.5px;top:53.3px" width="4" height="3" viewBox="0 0 4 3" fill="none" stroke="none" stroke-width="0.9" stroke-linecap="round" stroke-linejoin="round"><path d="M0.3 0.5 H3.7 L2 2.5 Z" fill="#a0a0a0" stroke="none"/></svg><svg style="left:732.2px;top:66.5px" width="10" height="10" viewBox="0 0 10 10" fill="none" stroke="#a0a0a0" stroke-width="0.8" stroke-linecap="round" stroke-linejoin="round"><rect x="1.5" y="0.6" width="7" height="6" rx="0.6"/><path d="M0.6 7.8 H9.4 V9.4 H0.6 Z"/></svg><svg style="left:744.5px;top:70.5px" width="4" height="3" viewBox="0 0 4 3" fill="none" stroke="none" stroke-width="0.9" stroke-linecap="round" stroke-linejoin="round"><path d="M0.3 0.5 H3.7 L2 2.5 Z" fill="#a0a0a0" stroke="none"/></svg><div class="a" style="left:757.2px;top:43px;width:0.8px;height:42px;background:#e4e4e4"></div><div class="t " style="left:766.5px;top:49.8px;font-size:8.6px;color:#111;">C</div><div class="t " style="left:766.5px;top:66.8px;font-size:8.6px;color:#111;">E</div><div class="a" style="left:771.4px;top:43.8px;width:11.9px;height:38.4px;background:#ececec;border-radius:3px"></div><svg style="left:775.5px;top:59.5px" width="4" height="7" viewBox="0 0 4 7" fill="none" stroke="#444" stroke-width="0.9" stroke-linecap="round" stroke-linejoin="round"><path d="M0.6 0.6 L3.2 3.5 L0.6 6.4"/></svg><svg style="left:16px;top:104.6px" width="4" height="3.2" viewBox="0 0 4 3.2" fill="none" stroke="none" stroke-width="0.9" stroke-linecap="round" stroke-linejoin="round"><path d="M0 0 H3.6 L1.8 3 Z" fill="#333" stroke="none"/></svg><div class="t k1" style="left:22px;top:102.5px;font-size:7.6px;color:#222;">默认节</div><div class="s" style="left:22px;top:122.5px;"><svg style="left:0;top:0" width="60" height="42" viewBox="0 0 60 42"><defs><filter id="bl1" x="-10%" y="-10%" width="120%" height="120%"><feGaussianBlur stdDeviation="0.6"/></filter><filter id="bb1" x="-20%" y="-20%" width="140%" height="140%"><feGaussianBlur stdDeviation="1.5"/></filter></defs><path d="M25.5 14.8 C26 12.8 28 12.5 29.8 13.4 C31.6 12.5 33.6 12.8 34.1 14.8 L33 14.8 C32.5 14 31 13.8 29.8 14.6 C28.6 13.8 27 14 26.5 14.8 Z" fill="#111"/><rect x="16.5" y="19.5" width="27" height=".5" fill="#c4c4c4"/><rect x="28.5" y="22.8" width="2.5" height=".6" fill="#ccc"/><rect x="27" y="30.5" width="5" height=".5" fill="#c8c8c8"/></svg></div><div class="n" style="left:25.5px;top:171.2px">1</div><div class="s" style="left:106px;top:122.5px;"></div><div class="n" style="left:109.5px;top:171.2px">2</div><div class="s" style="left:190px;top:122.5px;"><div class="a" style="left:14px;top:19px;width:2.5px;height:0.6px;background:#aaa"></div><div class="a" style="left:13.5px;top:20.6px;width:3.5px;height:0.4px;background:#ccc"></div><div class="a" style="left:36px;top:14.3px;width:1px;height:0.6px;background:#888"></div><div class="a" style="left:37.5px;top:14.3px;width:8px;height:0.5px;background:#bbb"></div><div class="a" style="left:37.5px;top:15.700000000000001px;width:3px;height:0.4px;background:#ccc"></div><div class="a" style="left:36px;top:19.8px;width:1px;height:0.6px;background:#888"></div><div class="a" style="left:37.5px;top:19.8px;width:8px;height:0.5px;background:#bbb"></div><div class="a" style="left:37.5px;top:21.2px;width:3px;height:0.4px;background:#ccc"></div><div class="a" style="left:36px;top:25.3px;width:1px;height:0.6px;background:#888"></div><div class="a" style="left:37.5px;top:25.3px;width:8px;height:0.5px;background:#bbb"></div><div class="a" style="left:37.5px;top:26.7px;width:3px;height:0.4px;background:#ccc"></div><div class="a" style="left:36px;top:30.6px;width:1px;height:0.6px;background:#888"></div><div class="a" style="left:37.5px;top:30.6px;width:8px;height:0.5px;background:#bbb"></div><div class="a" style="left:37.5px;top:32.0px;width:3px;height:0.4px;background:#ccc"></div></div><div class="n" style="left:193.5px;top:171.2px">3</div><div class="s" style="left:274px;top:122.5px;"><div class="a" style="left:7.5px;top:19.3px;width:9px;height:0.6px;background:#999"></div><div class="a" style="left:7.5px;top:20.9px;width:5px;height:0.4px;background:#bbb"></div><div class="a" style="left:29.5px;top:17.8px;width:4px;height:3.8px;border:0.5px solid #aaa;border-radius:1px"></div><div class="a" style="left:35.5px;top:19.7px;width:1px;height:0.5px;background:#bbb"></div><div class="a" style="left:39.1px;top:17.599999999999998px;width:4.2px;height:4.2px;border-radius:50%;border:0.5px solid #aaa"></div></div><div class="n" style="left:277.5px;top:171.2px">4</div><div class="s" style="left:358px;top:122.5px;"><svg style="left:0;top:0" width="60" height="42" viewBox="0 0 60 42"><defs><filter id="bl5" x="-10%" y="-10%" width="120%" height="120%"><feGaussianBlur stdDeviation="0.6"/></filter><filter id="bb5" x="-20%" y="-20%" width="140%" height="140%"><feGaussianBlur stdDeviation="1.5"/></filter><linearGradient id="a5" x1="0" y1="0" x2="0" y2="1"><stop offset="0" stop-color="#e0e0e0"/><stop offset="0.35" stop-color="#c8c8c8"/><stop offset="0.45" stop-color="#6a6a6a"/><stop offset="0.7" stop-color="#8a8a8a"/><stop offset="1" stop-color="#707070"/></linearGradient><radialGradient id="b5" cx="0.5" cy="0.5" r="0.6"><stop offset="0" stop-color="#c89068"/><stop offset="0.5" stop-color="#8a5030"/><stop offset="1" stop-color="#3a1a0c"/></radialGradient></defs><rect width="60" height="42" fill="#0c0c0c"/><rect x="1.8" y="1.6" width="27.9" height="38.8" fill="url(#a5)"/><g stroke="#f0f0f0" stroke-width=".6" opacity=".6"><path d="M2 14 L20 2 M2 8 L12 2 M8 16 L28 4 M16 16 L29 9"/></g><g filter="url(#bl5)"><rect x="2" y="16" width="27.5" height="10" fill="#3a3a3a"/><rect x="5" y="19" width="4" height="3" fill="#f0f0f0"/><rect x="11" y="19" width="5" height="3" fill="#e8e8e8"/><rect x="19" y="19" width="4" height="3" fill="#f0f0f0"/><path d="M2 34 L29 26 L29 30 L6 40 Z" fill="#505050"/><rect x="13" y="9" width="4" height="5" fill="#9a9a9a"/></g><rect x="29.9" y="1.6" width="28.3" height="38.8" fill="url(#b5)"/><g filter="url(#bl5)"><ellipse cx="44" cy="20" rx="10" ry="13" fill="none" stroke="#d0a070" stroke-width="2"/><ellipse cx="50" cy="11" rx="4.5" ry="4" fill="#90a8d0"/><ellipse cx="42" cy="24" rx="7" ry="6" fill="#e0b898"/><ellipse cx="40" cy="30" rx="5" ry="3" fill="#c89878"/></g></svg></div><div class="n" style="left:361.5px;top:171.2px">5</div><div class="s" style="left:442px;top:122.5px;"><svg style="left:0;top:0" width="60" height="42" viewBox="0 0 60 42"><defs><filter id="bl6" x="-10%" y="-10%" width="120%" height="120%"><feGaussianBlur stdDeviation="0.6"/></filter><filter id="bb6" x="-20%" y="-20%" width="140%" height="140%"><feGaussianBlur stdDeviation="1.5"/></filter><linearGradient id="a6" x1="0" y1="0" x2="0" y2="1"><stop offset="0" stop-color="#8a8a8a"/><stop offset="0.4" stop-color="#c0c0c0"/><stop offset="0.6" stop-color="#6a6a6a"/><stop offset="1" stop-color="#a0a0a0"/></linearGradient><radialGradient id="b6" cx="0.5" cy="0.4" r="0.7"><stop offset="0" stop-color="#e8f0f4"/><stop offset="0.5" stop-color="#a8c0cc"/><stop offset="1" stop-color="#5a7888"/></radialGradient></defs><rect width="60" height="42" fill="#0c0c0c"/><rect x="3.5" y="1.8" width="25.8" height="38.6" fill="url(#a6)"/><g filter="url(#bl6)"><path d="M3.5 2 L16 16 L29 2 Z" fill="#d8d8d8"/><rect x="12" y="16" width="8" height="10" fill="#f0f0f0"/><rect x="3.5" y="16" width="5" height="18" fill="#2a2a2a"/><rect x="24" y="16" width="5" height="18" fill="#2a2a2a"/><rect x="7" y="34" width="19" height="3.5" fill="#e8e8e8"/><rect x="10" y="28" width="13" height="4" fill="#b0b0b0"/></g><rect x="29.6" y="1.8" width="28.6" height="38.6" fill="url(#b6)"/><g filter="url(#bb6)"><ellipse cx="44" cy="16" rx="10" ry="9" fill="#f4f8fa"/><path d="M30 24 L40 40 L30 40 Z" fill="#2a4a40"/><ellipse cx="48" cy="36" rx="9" ry="3" fill="#d8e8e8"/></g><g stroke="#90a8b0" stroke-width=".6" fill="none" opacity=".7"><path d="M31 6 C40 14 50 26 56 40 M58 10 C48 18 40 28 36 40"/></g></svg></div><div class="n" style="left:445.5px;top:171.2px">6</div><div class="s" style="left:526px;top:122.5px;"><svg style="left:0;top:0" width="60" height="42" viewBox="0 0 60 42"><defs><filter id="bl7" x="-10%" y="-10%" width="120%" height="120%"><feGaussianBlur stdDeviation="0.6"/></filter><filter id="bb7" x="-20%" y="-20%" width="140%" height="140%"><feGaussianBlur stdDeviation="1.5"/></filter><linearGradient id="a7" x1="0" y1="0" x2="0" y2="1"><stop offset="0" stop-color="#b0b0b0"/><stop offset="0.3" stop-color="#e0e0e0"/><stop offset="0.5" stop-color="#c0c0c0"/><stop offset="0.8" stop-color="#909090"/><stop offset="1" stop-color="#707070"/></linearGradient><linearGradient id="b7" x1="0" y1="0" x2="0" y2="1"><stop offset="0" stop-color="#e8dcd8"/><stop offset="0.5" stop-color="#dcd4d0"/><stop offset="1" stop-color="#c8b8a8"/></linearGradient></defs><rect width="60" height="42" fill="#0c0c0c"/><rect x="1.8" y="1.8" width="27.9" height="38.6" fill="url(#a7)"/><g stroke="#2a2a2a" stroke-width=".9"><path d="M2 4 L13 20 M29 4 L18 20"/></g><g filter="url(#bl7)"><rect x="13" y="8" width="2.5" height="12" fill="#303030"/><rect x="17" y="8" width="2.5" height="12" fill="#383838"/><rect x="8" y="26" width="16" height="2" fill="#1a1a1a"/><rect x="2" y="33" width="28" height="7" fill="#8a8a8a"/><rect x="4" y="20" width="3" height="12" fill="#f4f4f4"/><rect x="25" y="20" width="3" height="12" fill="#f4f4f4"/></g><rect x="29.9" y="1.8" width="28.3" height="38.6" fill="url(#b7)"/><g filter="url(#bl7)"><path d="M30 10 C40 4 50 3 58 6 V14 C48 10 40 11 30 18 Z" fill="#f0e8e4"/><rect x="36" y="16" width="18" height="8" fill="#a8b4c8" opacity=".7"/><path d="M32 30 L58 22 V34 L36 40 Z" fill="#d8c8bc" opacity=".8"/><rect x="30" y="14" width="4" height="20" fill="#f4f4f8"/></g></svg></div><div class="n" style="left:529.5px;top:171.2px">7</div><div class="s" style="left:610px;top:122.5px;"><svg style="left:0;top:0" width="60" height="42" viewBox="0 0 60 42"><defs><filter id="bl8" x="-10%" y="-10%" width="120%" height="120%"><feGaussianBlur stdDeviation="0.6"/></filter><filter id="bb8" x="-20%" y="-20%" width="140%" height="140%"><feGaussianBlur stdDeviation="1.5"/></filter></defs><rect width="60" height="42" fill="#080505"/><g filter="url(#bb8)"><ellipse cx="30" cy="18" rx="9" ry="6" fill="#6a3020" opacity=".7"/><ellipse cx="30" cy="19" rx="4" ry="2.5" fill="#e8a080"/></g><ellipse cx="30" cy="19.5" rx="2.6" ry="1.6" fill="#fbe8dc"/><path d="M17 28 C20 21 40 21 43 28" fill="none" stroke="#d8d8d8" stroke-width=".7"/><path d="M20 21.5 H40 M21 23 H39" stroke="#c8c8c8" stroke-width=".5"/></svg></div><div class="n" style="left:613.5px;top:171.2px">8</div><div class="s" style="left:22px;top:189.0px;"><div class="a" style="left:52px;top:2.6px;width:4.5px;height:0.5px;background:#aaa"></div><div class="a" style="left:4.5px;top:17.8px;width:4px;height:0.6px;background:#999"></div><div class="a" style="left:4.5px;top:19.5px;width:3.5px;height:0.4px;background:#bbb"></div><div class="a" style="left:25px;top:16.5px;width:9px;height:7px;border:0.5px solid #ccc;border-bottom:none;border-radius:50% 50% 0 0"></div><div class="a" style="left:17px;top:20.5px;width:26px;height:0.3px;background:#ddd"></div><div class="a" style="left:38px;top:18.5px;width:5px;height:2.5px;border:0.4px solid #bbb;border-radius:40%"></div><div class="a" style="left:3px;top:38.8px;width:7px;height:0.6px;background:#888"></div></div><div class="n" style="left:25.5px;top:237.7px">9</div><div class="s" style="left:106px;top:189.0px;"><svg style="left:0;top:0" width="60" height="42" viewBox="0 0 60 42"><defs><filter id="bl10" x="-10%" y="-10%" width="120%" height="120%"><feGaussianBlur stdDeviation="0.6"/></filter><filter id="bb10" x="-20%" y="-20%" width="140%" height="140%"><feGaussianBlur stdDeviation="1.5"/></filter><linearGradient id="g10" x1="0" y1="0" x2="0" y2="1"><stop offset="0" stop-color="#b0b4b4"/><stop offset="0.5" stop-color="#d0d2d2"/><stop offset="1" stop-color="#e0e0e0"/></linearGradient></defs><rect width="60" height="42" fill="url(#g10)"/><path d="M2 42 V26 C4 10 16 3.5 30 3.5 C44 3.5 56 10 58 26 V42 Z" fill="none" stroke="#f6f6f6" stroke-width="6.5"/><g stroke="#9a9a9a" stroke-width=".6" opacity=".55" stroke-dasharray="1 1"><path d="M2 26 C4 10 16 3.5 30 3.5 C44 3.5 56 10 58 26" fill="none"/><path d="M5 26 C7 13 17 6.5 30 6.5 C43 6.5 53 13 55 26" fill="none"/></g><g filter="url(#bl10)"><path d="M8 42 V27 C10 15 19 9.5 30 9.5 C41 9.5 50 15 52 27 V42 Z" fill="#c4c6c6"/><path d="M21 42 V34 C21 29 25 26.5 30 26.5 C35 26.5 39 29 39 34 V42 Z" fill="#f6f4f4"/><rect y="37" width="60" height="5" fill="#e8e8e8"/><rect x="3" y="30" width="3" height="7" fill="#fafafa"/><rect x="54" y="30" width="3" height="7" fill="#fafafa"/></g><rect x="27" y="9" width="3" height="1.2" fill="#444"/></svg></div><div class="n" style="left:109.5px;top:237.7px">10</div><div class="s" style="left:190px;top:189.0px;"><svg style="left:0;top:0" width="60" height="42" viewBox="0 0 60 42"><defs><filter id="bl11" x="-10%" y="-10%" width="120%" height="120%"><feGaussianBlur stdDeviation="0.6"/></filter><filter id="bb11" x="-20%" y="-20%" width="140%" height="140%"><feGaussianBlur stdDeviation="1.5"/></filter><radialGradient id="g11" cx="0.5" cy="0.2" r="0.8"><stop offset="0" stop-color="#a8a8b4"/><stop offset="0.35" stop-color="#7a7478"/><stop offset="0.65" stop-color="#5a4a44"/><stop offset="1" stop-color="#2a201c"/></radialGradient></defs><rect width="60" height="42" fill="url(#g11)"/><g fill="none" stroke-width="1.8" opacity=".8"><ellipse cx="30" cy="3" rx="9" ry="5.9" stroke="#a8a8b0" stroke-dasharray="1.6 .9"/><ellipse cx="30" cy="3" rx="14" ry="9.2" stroke="#7a6a60" stroke-dasharray="1.6 .9"/><ellipse cx="30" cy="3" rx="19" ry="12.5" stroke="#9a9aa4" stroke-dasharray="1.6 .9"/><ellipse cx="30" cy="3" rx="24" ry="15.8" stroke="#6a5850" stroke-dasharray="1.6 .9"/><ellipse cx="30" cy="3" rx="29" ry="19.1" stroke="#8a8890" stroke-dasharray="1.6 .9"/><ellipse cx="30" cy="3" rx="34" ry="22.4" stroke="#5a4840" stroke-dasharray="1.6 .9"/></g><circle cx="30" cy="3.5" r="3" fill="#ffffff"/><g filter="url(#bl11)"><path d="M27 6 L33 6 L38 30 L22 30 Z" fill="#d8d8e0" opacity=".3"/><rect x="0" y="25" width="60" height="10" fill="#4a3a34" opacity=".55"/><rect x="4" y="26" width="2" height="8" fill="#7a6a60" opacity=".7"/><rect x="11" y="26" width="2" height="8" fill="#7a6a60" opacity=".7"/><rect x="18" y="26" width="2" height="8" fill="#7a6a60" opacity=".7"/><rect x="25" y="26" width="2" height="8" fill="#7a6a60" opacity=".7"/><rect x="32" y="26" width="2" height="8" fill="#7a6a60" opacity=".7"/><rect x="39" y="26" width="2" height="8" fill="#7a6a60" opacity=".7"/><rect x="46" y="26" width="2" height="8" fill="#7a6a60" opacity=".7"/><rect x="53" y="26" width="2" height="8" fill="#7a6a60" opacity=".7"/><rect x="18" y="24" width="6" height="9" fill="#f4e8d4"/><ellipse cx="21" cy="22" rx="4" ry="2" fill="#f0e0c0"/><rect y="34" width="60" height="8" fill="#3a3a40"/></g></svg></div><div class="n" style="left:193.5px;top:237.7px">11</div><div class="s" style="left:274px;top:189.0px;"><svg style="left:0;top:0" width="60" height="42" viewBox="0 0 60 42"><defs><filter id="bl12" x="-10%" y="-10%" width="120%" height="120%"><feGaussianBlur stdDeviation="0.6"/></filter><filter id="bb12" x="-20%" y="-20%" width="140%" height="140%"><feGaussianBlur stdDeviation="1.5"/></filter><linearGradient id="p12" x1="0" y1="0" x2="0.3" y2="1"><stop offset="0" stop-color="#dcd0b4"/><stop offset="0.5" stop-color="#d6c8a8"/><stop offset="1" stop-color="#cbbb94"/></linearGradient><radialGradient id="q12" cx="0.5" cy="0.35" r="0.6"><stop offset="0" stop-color="#f0e8d8"/><stop offset="0.6" stop-color="#a89880"/><stop offset="1" stop-color="#6a5a48"/></radialGradient></defs><rect x="28.8" y="0.8" width="28.6" height="40.5" fill="url(#p12)"/><circle cx="36.5" cy="9.5" r="5.2" fill="url(#q12)"/><circle cx="50" cy="9.5" r="5.2" fill="none" stroke="#9a8a70" stroke-width=".6"/><circle cx="50" cy="34" r="5" fill="none" stroke="#a89878" stroke-width=".5"/><path d="M40 36 C42 31 46 30 48 28" stroke="#8a7a60" stroke-width="1.4" fill="none" opacity=".6"/><path d="M32 20 C38 18 46 22 54 20" stroke="#b0a080" stroke-width=".6" fill="none"/><path d="M8 20 C10 13 16 11 22 11 C26 11 28 13 29 16" stroke="#7a90c0" stroke-width="1.6" fill="none"/><path d="M11 20 C13 15 18 13 23 14" stroke="#c0cce0" stroke-width="1" fill="none"/><path d="M4 15 L12 20" stroke="#999" stroke-width=".4"/><path d="M6.0 25 C6.0 23 7.5 22 8.5 22 C9.5 22 11.0 23 11.0 25 Z" fill="#888"/><path d="M11.5 25 C11.5 23 13.0 22 14.0 22 C15.0 22 16.5 23 16.5 25 Z" fill="#222"/><path d="M17.0 25 C17.0 23 18.5 22 19.5 22 C20.5 22 22.0 23 22.0 25 Z" fill="#999"/><path d="M22.5 25 C22.5 23 24.0 22 25.0 22 C26.0 22 27.5 23 27.5 25 Z" fill="#777"/><path d="M6.0 29 C6.0 27 7.5 26 8.5 26 C9.5 26 11.0 27 11.0 29 Z" fill="#777"/><path d="M11.5 29 C11.5 27 13.0 26 14.0 26 C15.0 26 16.5 27 16.5 29 Z" fill="#aaa"/><path d="M17.0 29 C17.0 27 18.5 26 19.5 26 C20.5 26 22.0 27 22.0 29 Z" fill="#333"/><path d="M22.5 29 C22.5 27 24.0 26 25.0 26 C26.0 26 27.5 27 27.5 29 Z" fill="#555"/><rect x="6" y="31.5" width="2" height="1.6" fill="#c03030"/><rect x="12" y="31.5" width="3" height="1.6" fill="#aaa"/><rect x="17.5" y="31.5" width="3" height="1.6" fill="#aaa"/><rect x="23" y="31.5" width="3" height="1.6" fill="#aaa"/><rect x="3" y="38.8" width="6" height=".5" fill="#999"/></svg></div><div class="n" style="left:277.5px;top:237.7px">12</div><div class="s" style="left:358px;top:189.0px;"><svg style="left:0;top:0" width="60" height="42" viewBox="0 0 60 42"><defs><filter id="bl13" x="-10%" y="-10%" width="120%" height="120%"><feGaussianBlur stdDeviation="0.6"/></filter><filter id="bb13" x="-20%" y="-20%" width="140%" height="140%"><feGaussianBlur stdDeviation="1.5"/></filter><linearGradient id="a13" x1="0" y1="0" x2="1" y2="1"><stop offset="0" stop-color="#706050"/><stop offset="0.5" stop-color="#c0b090"/><stop offset="1" stop-color="#806848"/></linearGradient><linearGradient id="b13" x1="0" y1="0" x2="0" y2="1"><stop offset="0" stop-color="#a02828"/><stop offset="0.3" stop-color="#4868c0"/><stop offset="0.7" stop-color="#90a0c8"/><stop offset="1" stop-color="#304070"/></linearGradient><linearGradient id="c13" x1="0" y1="0" x2="0" y2="1"><stop offset="0" stop-color="#2a1a10"/><stop offset="0.5" stop-color="#5a4838"/><stop offset="1" stop-color="#a8a098"/></linearGradient></defs><rect x="3" y="3.2" width="5" height="1.1" fill="#777"/><rect x="3" y="5.2" width="4" height=".5" fill="#bbb"/><rect x="52" y="2.6" width="4.5" height=".5" fill="#aaa"/><rect x="3" y="38.8" width="7" height=".6" fill="#999"/><ellipse cx="30.5" cy="10.5" rx="4" ry="3.2" fill="#e4aaa2"/><ellipse cx="30.5" cy="11" rx="6.5" ry=".9" fill="#eccac4"/><g fill="none" stroke="#999" stroke-width=".5"><path d="M11 23 C11 20 13 19 15 19 C17 19 19 20 19 23 Z"/><circle cx="19.5" cy="20" r="2.5"/><path d="M30 23 C30 21 32 20 34 20 C36 20 38 21 38 23 Z" stroke="#ccc"/></g><path d="M46 23 C46 21 48 20 50 20 C52 20 54 21 54 23 Z" fill="#888"/><rect x="16" y="25" width="2" height="3" fill="#aaa"/><rect x="32" y="25" width="3" height="2.5" fill="#aaa"/><rect x="47" y="25.5" width="5" height="1.6" fill="#444"/><rect x="7.3" y="29" width="13.2" height="9" fill="url(#a13)"/><rect x="23.5" y="29" width="13.2" height="9" fill="url(#b13)"/><rect x="39.8" y="29" width="13.7" height="9" fill="url(#c13)"/><g filter="url(#bl13)"><rect x="9" y="33" width="10" height="3" fill="#f0e8d0"/><rect x="26" y="33" width="3" height="4" fill="#e8e8f0"/><rect x="30" y="32" width="3" height="5" fill="#d0d0e0"/><rect x="43" y="33" width="7" height="3" fill="#c8c8c8"/></g></svg></div><div class="n" style="left:361.5px;top:237.7px">13</div><div class="s" style="left:442px;top:189.0px;"><svg style="left:0;top:0" width="60" height="42" viewBox="0 0 60 42"><defs><filter id="bl14" x="-10%" y="-10%" width="120%" height="120%"><feGaussianBlur stdDeviation="0.6"/></filter><filter id="bb14" x="-20%" y="-20%" width="140%" height="140%"><feGaussianBlur stdDeviation="1.5"/></filter><radialGradient id="a14" cx="0.5" cy="0.4" r="0.55"><stop offset="0" stop-color="#d88a48"/><stop offset="0.6" stop-color="#8a3a10"/><stop offset="1" stop-color="#3a1808"/></radialGradient><radialGradient id="b14" cx="0.5" cy="0.4" r="0.55"><stop offset="0" stop-color="#f0ece4"/><stop offset="0.6" stop-color="#a89c8c"/><stop offset="1" stop-color="#4a4238"/></radialGradient><radialGradient id="c14" cx="0.5" cy="0.4" r="0.55"><stop offset="0" stop-color="#b8d890"/><stop offset="0.55" stop-color="#5a8838"/><stop offset="1" stop-color="#1a2a10"/></radialGradient></defs><rect x="3" y="3.2" width="5" height="1.1" fill="#777"/><rect x="3" y="5.2" width="4" height=".5" fill="#bbb"/><rect x="52" y="2.6" width="4.5" height=".5" fill="#aaa"/><rect x="3" y="38.8" width="7" height=".6" fill="#999"/><ellipse cx="30" cy="10" rx="3.5" ry="3" fill="#e4aaa2"/><g fill="none" stroke="#bbb" stroke-width=".5"><ellipse cx="16" cy="17.5" rx="3.5" ry="2.5"/><ellipse cx="33" cy="17.5" rx="3.5" ry="2.5"/></g><ellipse cx="50" cy="16" rx="3" ry="1.5" fill="#666"/><ellipse cx="50" cy="18" rx="4" ry="2" fill="none" stroke="#bbb" stroke-width=".5"/><rect x="7.5" y="16.8" width="1.4" height="1.2" fill="#999"/><rect x="25" y="16.8" width="1.4" height="1.2" fill="#999"/><rect x="42.5" y="16.8" width="1.4" height="1.2" fill="#999"/><circle cx="13.5" cy="32.5" r="6.8" fill="url(#a14)"/><circle cx="33" cy="32.5" r="6.8" fill="url(#b14)"/><circle cx="52.5" cy="32.5" r="6.8" fill="url(#c14)"/><rect x="48" y="35" width="9" height="2" fill="#f0f0f0" opacity=".8"/><rect x="28" y="35" width="10" height="2" fill="#f4f4f4" opacity=".7"/></svg></div><div class="n" style="left:445.5px;top:237.7px">14</div><div class="s" style="left:526px;top:189.0px;"><div class="a" style="left:3px;top:3.6px;width:4px;height:1.0px;background:#666"></div><div class="a" style="left:3px;top:5.6px;width:4.5px;height:0.5px;background:#aaa"></div><div class="a" style="left:52px;top:2.6px;width:4.5px;height:0.5px;background:#aaa"></div><div class="a" style="left:20px;top:7px;width:6px;height:4px;background:radial-gradient(ellipse,#e0b0b0,#f0d8d8 55%,rgba(255,255,255,0) 72%)"></div><div class="a" style="left:31px;top:7px;width:6px;height:4px;background:radial-gradient(ellipse,#c0ccd8,#e0e6ec 55%,rgba(255,255,255,0) 72%)"></div><div class="a" style="left:39.5px;top:7.5px;width:4px;height:3px;background:radial-gradient(ellipse,#c06878,#e8b8c0 55%,rgba(255,255,255,0) 72%)"></div><div class="a" style="left:16px;top:17.5px;width:6px;height:4px;background:radial-gradient(ellipse,#e0b8b0,#f0e4dc 55%,rgba(255,255,255,0) 72%)"></div><div class="a" style="left:28px;top:18.5px;width:6px;height:4px;background:radial-gradient(ellipse,#e0b0b0,#d8e8e8 55%,rgba(255,255,255,0) 72%)"></div><div class="a" style="left:41px;top:18.5px;width:6px;height:4px;background:radial-gradient(ellipse,#e8c8b8,#dcecec 55%,rgba(255,255,255,0) 72%)"></div><div class="a" style="left:7px;top:25.5px;width:8px;height:5px;background:radial-gradient(ellipse,#b87080,#d8e4e4 55%,rgba(255,255,255,0) 72%)"></div><div class="a" style="left:21px;top:26.5px;width:8px;height:5px;background:radial-gradient(ellipse,#c88090,#d0e0e0 55%,rgba(255,255,255,0) 72%)"></div><div class="a" style="left:35px;top:26.5px;width:8px;height:5px;background:radial-gradient(ellipse,#a0c0c0,#c89098 55%,rgba(255,255,255,0) 72%)"></div><div class="a" style="left:49px;top:26.5px;width:8px;height:5px;background:radial-gradient(ellipse,#b87080,#d0dce4 55%,rgba(255,255,255,0) 72%)"></div><div class="a" style="left:7.5px;top:35px;width:7px;height:4px;background:radial-gradient(ellipse,#b87080,#d0d8e0 55%,rgba(255,255,255,0) 72%)"></div><div class="a" style="left:17px;top:35px;width:8px;height:4px;background:radial-gradient(ellipse,#b87080,#c0d8d8 55%,rgba(255,255,255,0) 72%)"></div><div class="a" style="left:28px;top:34.5px;width:8px;height:4px;background:radial-gradient(ellipse,#c88090,#c0d8d8 55%,rgba(255,255,255,0) 72%)"></div><div class="a" style="left:39px;top:35px;width:8px;height:4px;background:radial-gradient(ellipse,#a8c8c8,#c87080 55%,rgba(255,255,255,0) 72%)"></div><div class="a" style="left:50px;top:35px;width:6px;height:4px;background:radial-gradient(ellipse,#c88090,#c0d8d8 55%,rgba(255,255,255,0) 72%)"></div><div class="a" style="left:3px;top:38.8px;width:7px;height:0.6px;background:#888"></div></div><div class="n" style="left:529.5px;top:237.7px">15</div><div class="s" style="left:610px;top:189.0px;"><div class="a" style="left:3px;top:3.6px;width:5px;height:1.0px;background:#666"></div><div class="a" style="left:3px;top:5.6px;width:4.5px;height:0.5px;background:#aaa"></div><div class="a" style="left:52px;top:2.6px;width:4.5px;height:0.5px;background:#aaa"></div><div class="a" style="left:16.0px;top:9.0px;width:7.0px;height:7.0px;border-radius:50%;background:#ecb8b0"></div><div class="a" style="left:30px;top:9.5px;width:6px;height:6px;border-radius:50%;background:#c0d4e8"></div><div class="a" style="left:44.9px;top:9.4px;width:5.2px;height:5.2px;border-radius:50%;background:#ecc8d0"></div><div class="a" style="left:30px;top:15.5px;width:19px;height:8px;border:0.4px solid #e4e4e4;border-radius:1px"></div><div class="a" style="left:32px;top:20px;width:12px;height:0.5px;background:#bbb"></div><div class="a" style="left:14.7px;top:19.7px;width:1.6px;height:1.6px;border-radius:50%;background:#333"></div><div class="a" style="left:27.7px;top:19.7px;width:1.6px;height:1.6px;border-radius:50%;background:#333"></div><div class="a" style="left:14px;top:27px;width:11px;height:7px;background:radial-gradient(ellipse,#c08898,#b0d4dc 55%,rgba(255,255,255,0) 72%)"></div><div class="a" style="left:38px;top:28px;width:8px;height:6px;background:radial-gradient(ellipse,#8a5060,#e4d0d0 55%,rgba(255,255,255,0) 72%)"></div><div class="a" style="left:42px;top:32px;width:12px;height:6px;border-top:0.4px solid #ddd;transform:skewY(25deg)"></div><div class="a" style="left:3px;top:38.8px;width:7px;height:0.6px;background:#888"></div></div><div class="n" style="left:613.5px;top:237.7px">16</div><div class="s" style="left:22px;top:255.5px;"><div class="a" style="left:52px;top:2.6px;width:4.5px;height:0.5px;background:#aaa"></div><div class="a" style="left:4px;top:16.3px;width:3.5px;height:0.5px;background:#999"></div><div class="a" style="left:4px;top:17.8px;width:3px;height:0.4px;background:#bbb"></div><div class="a" style="left:10px;top:19px;width:26px;height:0.3px;background:#ddd"></div><div class="a" style="left:15px;top:17.2px;width:4.5px;height:2.8px;border:0.4px solid #aaa;border-top:none"></div><div class="a" style="left:24px;top:17.2px;width:4.5px;height:2.8px;border:0.4px solid #aaa;border-top:none"></div><div class="a" style="left:14.5px;top:17.2px;width:5.5px;height:0.4px;background:#999"></div><div class="a" style="left:23.5px;top:17.2px;width:5.5px;height:0.4px;background:#999"></div><div class="a" style="left:3px;top:38.8px;width:7px;height:0.6px;background:#888"></div></div><div class="n" style="left:25.5px;top:304.2px">17</div><div class="s" style="left:106px;top:255.5px;"><svg style="left:0;top:0" width="60" height="42" viewBox="0 0 60 42"><defs><filter id="bl18" x="-10%" y="-10%" width="120%" height="120%"><feGaussianBlur stdDeviation="0.6"/></filter><filter id="bb18" x="-20%" y="-20%" width="140%" height="140%"><feGaussianBlur stdDeviation="1.5"/></filter><linearGradient id="g18" x1="0" y1="0" x2="0" y2="1"><stop offset="0" stop-color="#2a5590"/><stop offset="0.22" stop-color="#4a88c8"/><stop offset="0.42" stop-color="#80b0dc"/><stop offset="0.55" stop-color="#d8e4ee"/><stop offset="0.66" stop-color="#f2f2f2"/><stop offset="1" stop-color="#ececec"/></linearGradient></defs><rect width="60" height="42" fill="url(#g18)"/><g filter="url(#bb18)"><ellipse cx="20" cy="11" rx="22" ry="3" fill="#e8f0f8" opacity=".5"/><ellipse cx="46" cy="7" rx="16" ry="2" fill="#e8f0f8" opacity=".4"/><ellipse cx="30" cy="34" rx="40" ry="12" fill="#f4f4f4"/><ellipse cx="52" cy="22" rx="14" ry="6" fill="#eeeeee"/><ellipse cx="8" cy="25" rx="10" ry="3" fill="#e8ecf0" opacity=".8"/></g><path d="M22 25 L26.5 20 L29 25 Z" fill="#2a2a30"/><path d="M10 26 Q13 23.5 17 26 Z" fill="#3a3a40"/><path d="M46 26 Q49 24 52 26 Z" fill="#5a5a60"/><g filter="url(#bl18)"><ellipse cx="30" cy="34" rx="36" ry="8.5" fill="#f6f6f6"/></g><rect x="2.5" y="3.2" width="2.5" height="1.6" fill="#f4f4f4"/></svg></div><div class="n" style="left:109.5px;top:304.2px">18</div><div class="s" style="left:190px;top:255.5px;"><div class="a" style="left:3px;top:3.6px;width:5px;height:1.0px;background:#666"></div><div class="a" style="left:3px;top:5.6px;width:4.5px;height:0.5px;background:#aaa"></div><div class="a" style="left:52px;top:2.6px;width:4.5px;height:0.5px;background:#aaa"></div><div class="a" style="left:19.5px;top:17.8px;width:8px;height:4.5px;border:0.5px solid #888;border-top:none;border-radius:0 0 2px 2px"></div><div class="a" style="left:18.5px;top:17.5px;width:10px;height:0.5px;background:#888"></div><div class="a" style="left:33.5px;top:19.5px;width:1.5px;height:0.6px;background:#aaa"></div><div class="a" style="left:38px;top:16.5px;width:7.5px;height:5px;background:radial-gradient(ellipse,#7a90a8,#a8bcc8 50%,rgba(255,255,255,0) 72%)"></div><div class="a" style="left:3px;top:38.8px;width:7px;height:0.6px;background:#888"></div></div><div class="n" style="left:193.5px;top:304.2px">19</div><div class="s" style="left:274px;top:255.5px;"><svg style="left:0;top:0" width="60" height="42" viewBox="0 0 60 42"><defs><filter id="bl20" x="-10%" y="-10%" width="120%" height="120%"><feGaussianBlur stdDeviation="0.6"/></filter><filter id="bb20" x="-20%" y="-20%" width="140%" height="140%"><feGaussianBlur stdDeviation="1.5"/></filter><linearGradient id="c20_0" x1="0" y1="0" x2="0" y2="1"><stop offset="0" stop-color="#3a4a78"/><stop offset="0.45" stop-color="#d8e0ea"/><stop offset="0.6" stop-color="#a0b0c8"/><stop offset="1" stop-color="#1a2a50"/></linearGradient><linearGradient id="c20_1" x1="0" y1="0" x2="1" y2="1"><stop offset="0" stop-color="#7a8a58"/><stop offset="0.5" stop-color="#5a6a38"/><stop offset="1" stop-color="#303818"/></linearGradient><linearGradient id="c20_2" x1="0" y1="0" x2="0" y2="1"><stop offset="0" stop-color="#e88060"/><stop offset="0.35" stop-color="#c83a20"/><stop offset="0.6" stop-color="#2a1410"/><stop offset="1" stop-color="#a83030"/></linearGradient><linearGradient id="c20_3" x1="0" y1="0" x2="0" y2="1"><stop offset="0" stop-color="#505870"/><stop offset="0.5" stop-color="#8890a8"/><stop offset="1" stop-color="#404858"/></linearGradient><linearGradient id="c20_4" x1="0" y1="0" x2="0" y2="1"><stop offset="0" stop-color="#203848"/><stop offset="0.5" stop-color="#5a8890"/><stop offset="1" stop-color="#b0c8d0"/></linearGradient><linearGradient id="c20_5" x1="0" y1="0" x2="0" y2="1"><stop offset="0" stop-color="#1a2840"/><stop offset="0.45" stop-color="#c8d4e0"/><stop offset="0.6" stop-color="#405878"/><stop offset="1" stop-color="#182030"/></linearGradient></defs><rect x="3" y="3.2" width="7" height="1.1" fill="#777"/><rect x="3" y="5.2" width="4" height=".5" fill="#bbb"/><rect x="52" y="2.6" width="4.5" height=".5" fill="#aaa"/><rect x="3" y="38.8" width="7" height=".6" fill="#999"/><circle cx="33.2" cy="9.9" r="5.3" fill="url(#c20_0)"/><circle cx="49" cy="9.9" r="5.3" fill="url(#c20_1)"/><circle cx="33.2" cy="22.2" r="5.3" fill="url(#c20_2)"/><circle cx="49" cy="22.2" r="5.3" fill="url(#c20_3)"/><circle cx="33.2" cy="34.5" r="5.3" fill="url(#c20_4)"/><circle cx="49" cy="34.5" r="5.3" fill="url(#c20_5)"/><ellipse cx="12.5" cy="10.3" rx="7" ry="1.6" fill="none" stroke="#a8c8d8" stroke-width=".9"/><path d="M7.5 23 C7.5 19 10 17 13 17 C16 17 18.5 19 18.5 23 Z" fill="#f2b8a0"/><path d="M4.5 33 L13.4 30.5 L22.5 33 L13.4 35.8 Z" fill="none" stroke="#d87080" stroke-width="1.1"/></svg></div><div class="n" style="left:277.5px;top:304.2px">20</div><div class="s" style="left:358px;top:255.5px;"><svg style="left:0;top:0" width="60" height="42" viewBox="0 0 60 42"><defs><filter id="bl21" x="-10%" y="-10%" width="120%" height="120%"><feGaussianBlur stdDeviation="0.6"/></filter><filter id="bb21" x="-20%" y="-20%" width="140%" height="140%"><feGaussianBlur stdDeviation="1.5"/></filter></defs><rect x="3" y="3.2" width="6" height="1.1" fill="#777"/><rect x="3" y="5.2" width="4" height=".5" fill="#bbb"/><rect x="52" y="2.6" width="4.5" height=".5" fill="#aaa"/><rect x="3" y="38.8" width="7" height=".6" fill="#999"/><g filter="url(#bl21)"><path d="M5.5 10.5 L10.0 8 L15.5 11 L11.0 13.5 Z" fill="#d8a090" stroke="#b87060" stroke-width=".5"/><path d="M22 10.5 L27.175 8 L33.5 11 L28.325 13.5 Z" fill="#c8d8e8" stroke="#90a8c0" stroke-width=".5"/><path d="M38 10.5 L44.3 8 L52 11 L45.7 13.5 Z" fill="#f0e8e8" stroke="#8a4a4a" stroke-width=".5"/><path d="M14 15 L40 40 M20 14 L48 38" stroke="#e8e8e8" stroke-width="2.5"/></g><rect x="17" y="14" width="4" height=".5" fill="#aaa"/><rect x="36" y="14" width="4" height=".5" fill="#aaa"/><rect x="55" y="14" width="4" height=".5" fill="#aaa"/></svg></div><div class="n" style="left:361.5px;top:304.2px">21</div><div class="s" style="left:442px;top:255.5px;"><svg style="left:0;top:0" width="60" height="42" viewBox="0 0 60 42"><defs><filter id="bl22" x="-10%" y="-10%" width="120%" height="120%"><feGaussianBlur stdDeviation="0.6"/></filter><filter id="bb22" x="-20%" y="-20%" width="140%" height="140%"><feGaussianBlur stdDeviation="1.5"/></filter></defs><rect x="3" y="3.2" width="6" height="1.1" fill="#777"/><rect x="3" y="5.2" width="4" height=".5" fill="#bbb"/><rect x="52" y="2.6" width="4.5" height=".5" fill="#aaa"/><rect x="3" y="38.8" width="7" height=".6" fill="#999"/><g filter="url(#bl22)"><path d="M5.5 11.5 L9.55 9 L14.5 12 L10.45 14.5 Z" fill="#d8a090" stroke="#b87060" stroke-width=".5"/><path d="M22 11.5 L26.725 9 L32.5 12 L27.775 14.5 Z" fill="#c8d8e8" stroke="#90a8c0" stroke-width=".5"/><path d="M36 11.5 L40.5 9 L46 12 L41.5 14.5 Z" fill="#e8e8e8" stroke="#888" stroke-width=".5"/><path d="M10 16 L36 40 M16 15 L44 38" stroke="#ececec" stroke-width="2.5"/></g></svg></div><div class="n" style="left:445.5px;top:304.2px">22</div><div class="s" style="left:526px;top:255.5px;"><svg style="left:0;top:0" width="60" height="42" viewBox="0 0 60 42"><defs><filter id="bl23" x="-10%" y="-10%" width="120%" height="120%"><feGaussianBlur stdDeviation="0.6"/></filter><filter id="bb23" x="-20%" y="-20%" width="140%" height="140%"><feGaussianBlur stdDeviation="1.5"/></filter><linearGradient id="a23" x1="0" y1="0" x2="0" y2="1"><stop offset="0" stop-color="#7090c0"/><stop offset="0.5" stop-color="#a8c0d8"/><stop offset="1" stop-color="#8a8070"/></linearGradient><linearGradient id="b23" x1="0" y1="0" x2="0" y2="1"><stop offset="0" stop-color="#d0d8e0"/><stop offset="0.4" stop-color="#a0a4a8"/><stop offset="1" stop-color="#606060"/></linearGradient><radialGradient id="c23" cx="0.5" cy="0.4" r="0.65"><stop offset="0" stop-color="#f0f0f0"/><stop offset="0.3" stop-color="#9a9a9a"/><stop offset="0.7" stop-color="#3a3a3a"/><stop offset="1" stop-color="#1a1a1a"/></radialGradient></defs><rect width="60" height="42" fill="#0c0c0c"/><rect x="1.8" y="1.8" width="27.6" height="18.8" fill="url(#a23)"/><g stroke="#384050" stroke-width=".6" opacity=".8" fill="none"><path d="M2 6 L29 3 M2 11 L29 8 M6 2 L12 20 M14 2 L20 20 M22 2 L28 20"/></g><g filter="url(#bl23)"><path d="M2 12 C8 14 14 18 18 20.6 L2 20.6 Z" fill="#d0c8b8"/></g><rect x="1.8" y="21.3" width="27.6" height="19" fill="url(#b23)"/><path d="M4 40 C4 30 10 25 16 25 C22 25 28 30 28 40" fill="#7a7a7a" stroke="#2a2a2a" stroke-width=".8"/><g stroke="#3a3a3a" stroke-width=".5"><path d="M8 40 V30 M12 40 V27 M16 40 V25 M20 40 V27 M24 40 V30 M4 34 H28"/></g><rect x="29.9" y="1.8" width="28.3" height="38.5" fill="url(#c23)"/><g fill="none" stroke="#e8e8e8" stroke-width="1.2" opacity=".85"><ellipse cx="44" cy="18" rx="4" ry="3.2" stroke-dasharray="1.5 .8"/><ellipse cx="44" cy="18" rx="8" ry="6.4" stroke-dasharray="1.5 .8"/><ellipse cx="44" cy="18" rx="12" ry="9.6" stroke-dasharray="1.5 .8"/></g><g stroke="#d0d0d0" stroke-width=".6" opacity=".6"><path d="M30 40 L44 18 L58 40 M30 25 L44 18 L58 25"/></g></svg></div><div class="n" style="left:529.5px;top:304.2px">23</div><div class="s" style="left:610px;top:255.5px;"><svg style="left:0;top:0" width="60" height="42" viewBox="0 0 60 42"><defs><filter id="bl24" x="-10%" y="-10%" width="120%" height="120%"><feGaussianBlur stdDeviation="0.6"/></filter><filter id="bb24" x="-20%" y="-20%" width="140%" height="140%"><feGaussianBlur stdDeviation="1.5"/></filter></defs><rect x="3" y="3.2" width="6" height="1.1" fill="#777"/><rect x="3" y="5.2" width="4" height=".5" fill="#bbb"/><rect x="52" y="2.6" width="4.5" height=".5" fill="#aaa"/><rect x="3" y="38.8" width="7" height=".6" fill="#999"/><g filter="url(#bl24)"><path d="M20 10 L30 5 L42 10 L32 16 Z" fill="none" stroke="#444" stroke-width="1.4"/><path d="M24 10 L30 7 L37 10 L31 13 Z" fill="#bbb" stroke="#555" stroke-width=".6"/><path d="M26 15 C26 19 34 19 34 15" fill="#ddd" stroke="#777" stroke-width=".6"/><path d="M6 31 L13 27 L21 31 L14 35 Z" fill="#e8d8f0" stroke="#a070c8" stroke-width="1"/><path d="M23 31 L30 27 L38 31 L31 35 Z" fill="#ece0f4" stroke="#9a80c8" stroke-width="1"/><path d="M40 31 L47 27 L55 31 L48 35 Z" fill="#f0d0e8" stroke="#c060b0" stroke-width="1"/></g><rect x="39" y="19.5" width="4" height=".5" fill="#888"/><rect x="39" y="21" width="5" height=".5" fill="#888"/></svg></div><div class="n" style="left:613.5px;top:304.2px">24</div><div class="s" style="left:22px;top:322.0px;"><svg style="left:0;top:0" width="60" height="42" viewBox="0 0 60 42"><defs><filter id="bl25" x="-10%" y="-10%" width="120%" height="120%"><feGaussianBlur stdDeviation="0.6"/></filter><filter id="bb25" x="-20%" y="-20%" width="140%" height="140%"><feGaussianBlur stdDeviation="1.5"/></filter></defs><rect x="3" y="3.2" width="5" height="1.1" fill="#777"/><rect x="3" y="5.2" width="4" height=".5" fill="#bbb"/><rect x="52" y="2.6" width="4.5" height=".5" fill="#aaa"/><rect x="3" y="38.8" width="7" height=".6" fill="#999"/><g filter="url(#bl25)"><path d="M17.8 9.0 L21.0 7.2 L24.2 9.0 L21.0 10.8 Z" fill="#d8d8d8" stroke="#6a6a6a" stroke-width="0.7"/><path d="M23.1 13.0 L26.3 11.2 L29.5 13.0 L26.3 14.8 Z" fill="#d8d8d8" stroke="#6a6a6a" stroke-width="0.7"/><path d="M28.5 17.0 L31.7 15.2 L34.9 17.0 L31.7 18.8 Z" fill="#d8d8d8" stroke="#6a6a6a" stroke-width="0.7"/><path d="M33.8 21.0 L37.0 19.2 L40.2 21.0 L37.0 22.8 Z" fill="#d8d8d8" stroke="#6a6a6a" stroke-width="0.7"/><path d="M18 9 L24 6.5 L27 8 L21 10.5 Z" fill="#777"/><path d="M6.8 27.0 L10.0 25.2 L13.2 27.0 L10.0 28.8 Z" fill="#f0e0f4" stroke="#b070c0" stroke-width="0.7"/><path d="M11.8 31.0 L15.0 29.2 L18.2 31.0 L15.0 32.8 Z" fill="#f0e0f4" stroke="#b070c0" stroke-width="0.7"/><path d="M16.8 35.0 L20.0 33.2 L23.2 35.0 L20.0 36.8 Z" fill="#f0e0f4" stroke="#b070c0" stroke-width="0.7"/><path d="M23.8 27.0 L27.0 25.2 L30.2 27.0 L27.0 28.8 Z" fill="#f0e8f8" stroke="#a080c8" stroke-width="0.7"/><path d="M28.8 31.0 L32.0 29.2 L35.2 31.0 L32.0 32.8 Z" fill="#f0e8f8" stroke="#a080c8" stroke-width="0.7"/><path d="M33.8 35.0 L37.0 33.2 L40.2 35.0 L37.0 36.8 Z" fill="#f0e8f8" stroke="#a080c8" stroke-width="0.7"/><path d="M40.8 27.0 L44.0 25.2 L47.2 27.0 L44.0 28.8 Z" fill="#f4dcec" stroke="#c860a8" stroke-width="0.7"/><path d="M45.8 31.0 L49.0 29.2 L52.2 31.0 L49.0 32.8 Z" fill="#f4dcec" stroke="#c860a8" stroke-width="0.7"/><path d="M50.8 35.0 L54.0 33.2 L57.2 35.0 L54.0 36.8 Z" fill="#f4dcec" stroke="#c860a8" stroke-width="0.7"/></g><rect x="39" y="23" width="3" height=".6" fill="#aaa"/><rect x="39" y="24.5" width="5" height=".5" fill="#ccc"/><rect x="12" y="37.5" width="3" height=".5" fill="#ccc"/><rect x="29" y="37.5" width="3" height=".5" fill="#ccc"/><rect x="46" y="37.5" width="3" height=".5" fill="#ccc"/></svg></div><div class="n" style="left:25.5px;top:370.7px">25</div><div class="s" style="left:106px;top:322.0px;"><svg style="left:0;top:0" width="60" height="42" viewBox="0 0 60 42"><defs><filter id="bl26" x="-10%" y="-10%" width="120%" height="120%"><feGaussianBlur stdDeviation="0.6"/></filter><filter id="bb26" x="-20%" y="-20%" width="140%" height="140%"><feGaussianBlur stdDeviation="1.5"/></filter><linearGradient id="c26_0" x1="0" y1="0" x2="1" y2="1"><stop offset="0" stop-color="#e8eef4"/><stop offset="0.3" stop-color="#8aa0b8"/><stop offset="0.5" stop-color="#f0f0f0"/><stop offset="0.7" stop-color="#7a90a8"/><stop offset="1" stop-color="#d0d8e0"/></linearGradient><linearGradient id="c26_1" x1="0" y1="0" x2="0" y2="1"><stop offset="0" stop-color="#d0a878"/><stop offset="0.5" stop-color="#8a5a30"/><stop offset="1" stop-color="#3a2818"/></linearGradient><linearGradient id="c26_2" x1="0" y1="0" x2="0" y2="1"><stop offset="0" stop-color="#e8dcc8"/><stop offset="0.5" stop-color="#b89878"/><stop offset="0.85" stop-color="#6a5a48"/><stop offset="1" stop-color="#2a2420"/></linearGradient><linearGradient id="c26_3" x1="0" y1="0" x2="1" y2="1"><stop offset="0" stop-color="#7a7a80"/><stop offset="0.5" stop-color="#5a5a60"/><stop offset="1" stop-color="#8a8a90"/></linearGradient><linearGradient id="c26_4" x1="0" y1="0" x2="1" y2="1"><stop offset="0" stop-color="#c8d8e8"/><stop offset="0.4" stop-color="#90a8c8"/><stop offset="0.6" stop-color="#2a3a50"/><stop offset="1" stop-color="#506070"/></linearGradient><linearGradient id="c26_5" x1="0" y1="0" x2="0" y2="1"><stop offset="0" stop-color="#8a7880"/><stop offset="0.5" stop-color="#a09098"/><stop offset="1" stop-color="#605058"/></linearGradient><linearGradient id="c26_6" x1="0" y1="0" x2="1" y2="0"><stop offset="0" stop-color="#8a8a8a"/><stop offset="0.4" stop-color="#d8d8d8"/><stop offset="1" stop-color="#f4f4f4"/></linearGradient><linearGradient id="c26_7" x1="0" y1="0" x2="1" y2="1"><stop offset="0" stop-color="#e8f0f8"/><stop offset="0.5" stop-color="#c8d8e8"/><stop offset="1" stop-color="#b0c4d8"/></linearGradient></defs><rect x="3" y="3.2" width="7" height="1.1" fill="#777"/><rect x="3" y="5.2" width="4" height=".5" fill="#bbb"/><rect x="52" y="2.6" width="4.5" height=".5" fill="#aaa"/><rect x="3" y="38.8" width="7" height=".6" fill="#999"/><circle cx="8" cy="13.5" r="5.8" fill="url(#c26_0)"/><circle cx="21" cy="13.5" r="5.8" fill="url(#c26_1)"/><circle cx="36.5" cy="13.5" r="5.8" fill="url(#c26_2)"/><circle cx="52" cy="13.5" r="5.8" fill="url(#c26_3)"/><circle cx="8" cy="30" r="5.8" fill="url(#c26_4)"/><circle cx="21" cy="30" r="5.8" fill="url(#c26_5)"/><circle cx="36.5" cy="30" r="5.8" fill="url(#c26_6)"/><circle cx="52" cy="30" r="5.8" fill="url(#c26_7)"/></svg></div><div class="n" style="left:109.5px;top:370.7px">26</div><div class="s" style="left:190px;top:322.0px;"><svg style="left:0;top:0" width="60" height="42" viewBox="0 0 60 42"><defs><filter id="bl27" x="-10%" y="-10%" width="120%" height="120%"><feGaussianBlur stdDeviation="0.6"/></filter><filter id="bb27" x="-20%" y="-20%" width="140%" height="140%"><feGaussianBlur stdDeviation="1.5"/></filter><linearGradient id="p27" x1="0" y1="0" x2="1" y2="1"><stop offset="0" stop-color="#a8a0a0"/><stop offset="1" stop-color="#6a6666"/></linearGradient><linearGradient id="q27" x1="0" y1="0" x2="1" y2="1"><stop offset="0" stop-color="#6a6e6e"/><stop offset="1" stop-color="#3e3e3e"/></linearGradient><linearGradient id="r27" x1="0" y1="0" x2="0" y2="1"><stop offset="0" stop-color="#8aa0b8"/><stop offset="0.35" stop-color="#b0c0d0"/><stop offset="0.6" stop-color="#d8e0e4"/><stop offset="1" stop-color="#9a9a98"/></linearGradient></defs><rect x="3" y="3.2" width="5" height="1.1" fill="#777"/><rect x="3" y="5.2" width="4" height=".5" fill="#bbb"/><rect x="3" y="38.8" width="7" height=".6" fill="#999"/><circle cx="15.5" cy="13.5" r="5.8" fill="url(#p27)"/><circle cx="15.5" cy="33.5" r="5.8" fill="url(#q27)"/><rect x="31" y="1" width="27.7" height="39.6" fill="url(#r27)"/><g filter="url(#bl27)"><path d="M31 5 C40 9 48 8 58.7 5 V11 C48 14 40 14 31 10 Z" fill="#f4f4f4"/><path d="M31 12 C40 16 48 15 58.7 12 V14 C48 18 40 18 31 15 Z" fill="#e0e4e8"/><ellipse cx="55" cy="17" rx="3.5" ry="5" fill="#6a8060"/><rect x="31" y="1" width="27.7" height="2.5" fill="#8a9a78"/><path d="M31 29 L58.7 26 V30 L31 33 Z" fill="#f0eeea"/><path d="M31 33 L58.7 30 V34 L31 37 Z" fill="#c8c4bc"/><rect x="31" y="37.5" width="27.7" height="3.1" fill="#5a5a58"/></g></svg></div><div class="n" style="left:193.5px;top:370.7px">27</div><div class="s" style="left:274px;top:322.0px;"><div class="a" style="left:52px;top:2.6px;width:4.5px;height:0.5px;background:#aaa"></div><div class="a" style="left:4.5px;top:18.5px;width:3px;height:0.5px;background:#999"></div><div class="a" style="left:4.5px;top:20px;width:5px;height:0.4px;background:#bbb"></div><div class="a" style="left:42px;top:18.5px;width:8px;height:0.4px;background:#ccc"></div><div class="a" style="left:3px;top:38.8px;width:7px;height:0.6px;background:#888"></div></div><div class="n" style="left:277.5px;top:370.7px">28</div><div class="s" style="left:358px;top:322.0px;"><svg style="left:0;top:0" width="60" height="42" viewBox="0 0 60 42"><defs><filter id="bl29" x="-10%" y="-10%" width="120%" height="120%"><feGaussianBlur stdDeviation="0.6"/></filter><filter id="bb29" x="-20%" y="-20%" width="140%" height="140%"><feGaussianBlur stdDeviation="1.5"/></filter><linearGradient id="g29" x1="0" y1="0" x2="0" y2="1"><stop offset="0" stop-color="#8a9298"/><stop offset="0.3" stop-color="#7a8280"/><stop offset="0.55" stop-color="#6a7068"/><stop offset="0.8" stop-color="#4a4c48"/><stop offset="1" stop-color="#2a2a28"/></linearGradient></defs><rect width="60" height="42" fill="#080808"/><rect y="5.8" width="60" height="31" fill="url(#g29)"/><g filter="url(#bl29)"><rect x="31.6" y="17.0" width="4.5" height="1.4" fill="#404848" opacity=".85"/><rect x="52.1" y="18.2" width="2.1" height="1.0" fill="#b8c0c8" opacity=".85"/><rect x="37.2" y="28.9" width="2.3" height="1.7" fill="#404848" opacity=".85"/><rect x="31.3" y="29.7" width="2.6" height="2.5" fill="#d8dce0" opacity=".85"/><rect x="25.4" y="18.6" width="4.4" height="1.8" fill="#d8dce0" opacity=".85"/><rect x="31.4" y="19.0" width="2.8" height="2.1" fill="#b8c0c8" opacity=".85"/><rect x="53.8" y="20.3" width="2.4" height="1.5" fill="#f4f4f4" opacity=".85"/><rect x="33.7" y="24.8" width="3.2" height="1.9" fill="#e8ecf0" opacity=".85"/><rect x="41.5" y="31.1" width="4.6" height="1.4" fill="#5a6a58" opacity=".85"/><rect x="20.4" y="9.8" width="3.2" height="1.6" fill="#5a6a58" opacity=".85"/><rect x="25.0" y="15.3" width="3.9" height="1.2" fill="#5a6a58" opacity=".85"/><rect x="49.2" y="26.2" width="4.9" height="2.1" fill="#5a6a58" opacity=".85"/><rect x="13.1" y="15.2" width="4.9" height="1.0" fill="#b8c0c8" opacity=".85"/><rect x="51.2" y="11.5" width="2.5" height="2.4" fill="#e8ecf0" opacity=".85"/><rect x="41.1" y="27.8" width="2.9" height="1.0" fill="#5a6a58" opacity=".85"/><rect x="30.0" y="9.5" width="2.1" height="2.1" fill="#d8dce0" opacity=".85"/><rect x="11.4" y="19.7" width="2.7" height="1.0" fill="#d8dce0" opacity=".85"/><rect x="15.9" y="8.6" width="2.6" height="2.1" fill="#e8ecf0" opacity=".85"/><rect x="37.0" y="17.8" width="2.7" height="1.3" fill="#404848" opacity=".85"/><rect x="15.2" y="16.7" width="4.6" height="2.1" fill="#404848" opacity=".85"/><rect x="8.2" y="26.3" width="2.8" height="1.3" fill="#b8c0c8" opacity=".85"/><rect x="44.3" y="9.4" width="3.0" height="1.4" fill="#d8dce0" opacity=".85"/><rect x="17.6" y="25.5" width="3.3" height="1.6" fill="#b8c0c8" opacity=".85"/><rect x="44.5" y="8.7" width="3.0" height="1.2" fill="#d8dce0" opacity=".85"/><rect x="20.6" y="20.2" width="3.9" height="2.5" fill="#f4f4f4" opacity=".85"/><rect x="12.7" y="20.3" width="2.1" height="2.2" fill="#404848" opacity=".85"/><rect x="14.6" y="32.0" width="2.5" height="2.0" fill="#5a6a58" opacity=".85"/><rect x="20.4" y="12.6" width="4.9" height="1.7" fill="#5a6a58" opacity=".85"/><rect x="31.6" y="33.3" width="3.4" height="1.5" fill="#e8ecf0" opacity=".85"/><rect x="52.2" y="14.0" width="2.7" height="1.3" fill="#404848" opacity=".85"/><rect x="10.9" y="13.2" width="4.4" height="1.5" fill="#f4f4f4" opacity=".85"/><rect x="2.5" y="17.6" width="4.5" height="1.3" fill="#d8dce0" opacity=".85"/><rect x="52.4" y="14.5" width="3.6" height="1.5" fill="#b8c0c8" opacity=".85"/><rect x="18.1" y="25.1" width="4.2" height="2.1" fill="#404848" opacity=".85"/><rect x="5.9" y="14.7" width="5.0" height="2.2" fill="#d8dce0" opacity=".85"/><rect x="13.0" y="9.1" width="5.0" height="2.2" fill="#f4f4f4" opacity=".85"/><rect x="43.4" y="16.3" width="2.2" height="2.0" fill="#5a6a58" opacity=".85"/><rect x="45.8" y="26.4" width="4.4" height="2.1" fill="#f4f4f4" opacity=".85"/><rect x="8.7" y="25.8" width="2.9" height="2.3" fill="#404848" opacity=".85"/><rect x="39.6" y="17.0" width="4.7" height="2.2" fill="#d8dce0" opacity=".85"/><rect x="29.5" y="19.5" width="2.9" height="1.3" fill="#b8c0c8" opacity=".85"/><rect x="40.1" y="13.4" width="2.6" height="1.7" fill="#404848" opacity=".85"/><rect x="29.7" y="29.6" width="2.6" height="2.4" fill="#b8c0c8" opacity=".85"/><rect x="40.6" y="16.3" width="2.9" height="2.3" fill="#d8dce0" opacity=".85"/><rect x="15.7" y="27.2" width="2.7" height="1.3" fill="#d8dce0" opacity=".85"/><rect x="15.1" y="24.3" width="3.4" height="1.5" fill="#e8ecf0" opacity=".85"/><rect x="38.4" y="31.2" width="3.3" height="1.2" fill="#f4f4f4" opacity=".85"/><rect x="51.9" y="23.0" width="3.8" height="1.5" fill="#404848" opacity=".85"/><rect x="33.2" y="9.8" width="2.3" height="2.2" fill="#e8ecf0" opacity=".85"/><rect x="53.5" y="33.5" width="2.5" height="1.6" fill="#5a6a58" opacity=".85"/><rect x="49.7" y="16.2" width="2.5" height="1.7" fill="#e8ecf0" opacity=".85"/><rect x="21.8" y="12.0" width="2.1" height="1.6" fill="#b8c0c8" opacity=".85"/><rect x="2.1" y="33.9" width="4.0" height="2.1" fill="#d8dce0" opacity=".85"/><rect x="44.5" y="23.8" width="4.0" height="1.5" fill="#e8ecf0" opacity=".85"/><rect x="54.3" y="14.5" width="2.8" height="1.0" fill="#404848" opacity=".85"/><rect x="6.6" y="24.8" width="2.3" height="2.3" fill="#e8ecf0" opacity=".85"/><rect x="32.7" y="22.6" width="3.6" height="2.2" fill="#d8dce0" opacity=".85"/><rect x="26.4" y="25.4" width="4.9" height="2.5" fill="#5a6a58" opacity=".85"/><rect x="45.1" y="13.4" width="3.0" height="1.4" fill="#d8dce0" opacity=".85"/><rect x="45.8" y="8.1" width="4.8" height="1.5" fill="#404848" opacity=".85"/><rect x="8.5" y="23.1" width="4.1" height="1.4" fill="#b8c0c8" opacity=".85"/><rect x="28.2" y="23.8" width="2.5" height="2.4" fill="#5a6a58" opacity=".85"/><rect x="53.0" y="29.0" width="2.7" height="1.3" fill="#404848" opacity=".85"/><rect x="34.1" y="8.6" width="4.9" height="1.8" fill="#5a6a58" opacity=".85"/><rect x="31.2" y="8.9" width="3.3" height="1.3" fill="#f4f4f4" opacity=".85"/><rect x="9.7" y="11.4" width="3.1" height="1.4" fill="#e8ecf0" opacity=".85"/><rect x="4.1" y="32.2" width="3.8" height="2.1" fill="#f4f4f4" opacity=".85"/><rect x="52.1" y="11.8" width="2.2" height="2.0" fill="#e8ecf0" opacity=".85"/><rect x="16.0" y="16.1" width="2.1" height="1.1" fill="#404848" opacity=".85"/><rect x="48.9" y="16.5" width="2.6" height="1.1" fill="#d8dce0" opacity=".85"/><path d="M0 22 L34 38 L38 36 L2 19 Z" fill="#d8d8d8" opacity=".75"/><path d="M0 26 L30 41 L0 41 Z" fill="#2a2a28" opacity=".8"/><ellipse cx="30" cy="20" rx="12" ry="5" fill="#c8d0d8" opacity=".5"/></g><rect y="36.5" width="60" height="5.5" fill="#080808"/><rect x="3" y="2.2" width="5" height="1.3" fill="#ddd"/><rect x="8.5" y="2.7" width="6" height=".5" fill="#777"/><rect x="3" y="4.3" width="3" height=".5" fill="#666"/></svg></div><div class="n" style="left:361.5px;top:370.7px">29</div><div class="s" style="left:442px;top:322.0px;"><svg style="left:0;top:0" width="60" height="42" viewBox="0 0 60 42"><defs><filter id="bl30" x="-10%" y="-10%" width="120%" height="120%"><feGaussianBlur stdDeviation="0.6"/></filter><filter id="bb30" x="-20%" y="-20%" width="140%" height="140%"><feGaussianBlur stdDeviation="1.5"/></filter></defs><rect width="60" height="42" fill="#dcdcd4"/><rect width="60" height=".9" fill="#f4f4f4"/><rect x="3" y="3.2" width="5" height="1.1" fill="#777"/><rect x="3" y="5.2" width="4" height=".5" fill="#bbb"/><rect x="3" y="8.5" width="3" height="2" fill="#888"/><rect x="7" y="9" width="3" height=".5" fill="#aaa"/><rect x="21" y="5.5" width=".5" height="36" fill="#bbb"/><rect x="22.5" y="5.5" width="18" height="36" fill="#d4d0c2" stroke="#b8b4a8" stroke-width=".4"/><rect x="24.5" y="7.5" width="14" height="21" fill="#e4e0d6"/><rect x="25.5" y="8.5" width="4.5" height="4" fill="#f8f8f8"/><rect x="25.5" y="15.0" width="4.5" height="4" fill="#f8f8f8"/><rect x="25.5" y="21.5" width="4.5" height="4" fill="#f8f8f8"/><rect x="33.5" y="8.5" width="4.5" height="4" fill="#f8f8f8"/><rect x="33.5" y="15.0" width="4.5" height="4" fill="#f8f8f8"/><rect x="33.5" y="21.5" width="4.5" height="4" fill="#f8f8f8"/><circle cx="31.5" cy="18" r="2.3" fill="none" stroke="#888" stroke-width=".6"/><rect x="24.5" y="29" width="14" height="9" fill="#f2f2f2"/><rect x="24.5" y="33" width="14" height=".4" fill="#aaa"/><rect y="39.5" width="60" height="2.5" fill="#f6f6f6"/><rect x="53" y="37.5" width="4" height=".6" fill="#888"/></svg></div><div class="n" style="left:445.5px;top:370.7px">30</div><div class="s" style="left:526px;top:322.0px;"><svg style="left:0;top:0" width="60" height="42" viewBox="0 0 60 42"><defs><filter id="bl31" x="-10%" y="-10%" width="120%" height="120%"><feGaussianBlur stdDeviation="0.6"/></filter><filter id="bb31" x="-20%" y="-20%" width="140%" height="140%"><feGaussianBlur stdDeviation="1.5"/></filter><linearGradient id="p31" x1="0" y1="0" x2="0" y2="1"><stop offset="0" stop-color="#c8ccc0"/><stop offset="0.6" stop-color="#d8dcd8"/><stop offset="1" stop-color="#e4e8e4"/></linearGradient></defs><rect x="3" y="3.2" width="4" height="1.1" fill="#777"/><rect x="3" y="5.2" width="4" height=".5" fill="#bbb"/><rect x="52" y="2.6" width="4.5" height=".5" fill="#aaa"/><rect x="3" y="38.8" width="7" height=".6" fill="#999"/><rect x="8" y="13" width="17" height="26" fill="url(#p31)"/><circle cx="12.5" cy="16.5" r="2.4" fill="#f8f8f8"/><circle cx="12.5" cy="22.5" r="2.4" fill="#f8f8f8"/><circle cx="12.5" cy="28.5" r="2.4" fill="#f8f8f8"/><circle cx="19.5" cy="16.5" r="2.4" fill="#f8f8f8"/><circle cx="19.5" cy="22.5" r="2.4" fill="#f8f8f8"/><circle cx="19.5" cy="28.5" r="2.4" fill="#f8f8f8"/><rect x="3" y="37" width="30" height="2.2" fill="#dcdcdc" opacity=".85"/><rect x="8" y="5" width="14" height="6" fill="#ececec" opacity=".7"/><rect x="8" y="10" width="1" height="30" fill="#ddd"/><circle cx="37.5" cy="17.0" r="2.2" fill="none" stroke="#c84a5a" stroke-width="1.2"/><circle cx="43.8" cy="17.0" r="2.2" fill="none" stroke="#c84a5a" stroke-width="1.2"/><circle cx="37.5" cy="23.5" r="2.2" fill="none" stroke="#d89090" stroke-width="1.2"/><circle cx="43.8" cy="23.5" r="2.2" fill="none" stroke="#c84a5a" stroke-width="1.2"/><circle cx="37.5" cy="30.0" r="2.2" fill="none" stroke="#3a4a90" stroke-width="1.2"/><circle cx="43.8" cy="30.0" r="2.2" fill="none" stroke="#c84a5a" stroke-width="1.2"/><circle cx="37.5" cy="36.5" r="2.2" fill="none" stroke="#c84a5a" stroke-width="1.2"/><circle cx="43.8" cy="36.5" r="2.2" fill="none" stroke="#c84a5a" stroke-width="1.2"/><circle cx="51.0" cy="17.0" r="2.0" fill="none" stroke="#a8c0e0" stroke-width="1.1"/><circle cx="56.5" cy="17.0" r="2.0" fill="none" stroke="#c86070" stroke-width="1.1"/><circle cx="51.0" cy="23.5" r="2.0" fill="none" stroke="#c84a5a" stroke-width="1.1"/><circle cx="56.5" cy="23.5" r="2.0" fill="none" stroke="#c8d8e8" stroke-width="1.1"/><circle cx="51.0" cy="30.0" r="2.0" fill="none" stroke="#3a4a90" stroke-width="1.1"/><circle cx="56.5" cy="30.0" r="2.0" fill="none" stroke="#b0c8e0" stroke-width="1.1"/><circle cx="51.0" cy="36.5" r="2.0" fill="none" stroke="#e0a888" stroke-width="1.1"/><circle cx="56.5" cy="36.5" r="2.0" fill="none" stroke="#d89080" stroke-width="1.1"/><rect x="37" y="12.5" width="3" height=".6" fill="#999"/><rect x="51" y="12.5" width="4" height=".6" fill="#999"/><rect x="38" y="33.5" width="2.5" height=".5" fill="#999"/><rect x="38" y="35" width="4" height=".5" fill="#999"/><rect x="56" y="33.5" width="3" height=".5" fill="#999"/><rect x="56" y="35" width="3" height=".5" fill="#999"/></svg></div><div class="n" style="left:529.5px;top:370.7px">31</div><div class="s" style="left:610px;top:322.0px;"><svg style="left:0;top:0" width="60" height="42" viewBox="0 0 60 42"><defs><filter id="bl32" x="-10%" y="-10%" width="120%" height="120%"><feGaussianBlur stdDeviation="0.6"/></filter><filter id="bb32" x="-20%" y="-20%" width="140%" height="140%"><feGaussianBlur stdDeviation="1.5"/></filter><linearGradient id="g32" x1="0" y1="0" x2="0" y2="1"><stop offset="0" stop-color="#3a4640"/><stop offset="0.3" stop-color="#68706a"/><stop offset="0.5" stop-color="#a8a498"/><stop offset="0.62" stop-color="#8a8478"/><stop offset="0.75" stop-color="#6a6058"/><stop offset="1" stop-color="#5a5048"/></linearGradient></defs><rect width="60" height="42" fill="url(#g32)"/><g filter="url(#bl32)"><path d="M2 24 C10 20 20 16 30 16 C42 16 52 20 58 23 V27 H2 Z" fill="#e8e0d4"/><ellipse cx="30" cy="17" rx="10" ry="2.5" fill="#f4ece4"/><rect x="36" y="21" width="12" height="4" fill="#7a8088"/><rect y="27" width="60" height="4" fill="#8a8070"/></g><rect x="2.5" y="2.4" width="5" height="1.1" fill="#ddd"/><rect x="2.5" y="4.3" width="3" height=".5" fill="#999"/></svg></div><div class="n" style="left:613.5px;top:370.7px">32</div><div class="s" style="left:22px;top:388.5px;"><svg style="left:0;top:0" width="60" height="42" viewBox="0 0 60 42"><defs><filter id="bl33" x="-10%" y="-10%" width="120%" height="120%"><feGaussianBlur stdDeviation="0.6"/></filter><filter id="bb33" x="-20%" y="-20%" width="140%" height="140%"><feGaussianBlur stdDeviation="1.5"/></filter><linearGradient id="s33" x1="0" y1="0" x2="1" y2="0.2"><stop offset="0" stop-color="#ccc8bc"/><stop offset="0.4" stop-color="#b8bcc0"/><stop offset="0.6" stop-color="#a8b4c0"/><stop offset="1" stop-color="#c0bcb0"/></linearGradient></defs><rect width="60" height="42" fill="#0a0a0a"/><rect y="6.3" width="60" height="29.8" fill="url(#s33)"/><g filter="url(#bb33)"><ellipse cx="20" cy="13" rx="18" ry="3" fill="#ece8e0" opacity=".8"/><ellipse cx="46" cy="10" rx="12" ry="2" fill="#d8e0e8" opacity=".6"/></g><g filter="url(#bl33)"><path d="M0 20.5 C10 20 22 21 28 23 H32 C38 21 50 20 60 20.5 V24 H0 Z" fill="#f2eee8"/><path d="M7 26 C7 23 12 22.5 15 22.5 C19 22.5 24 23 24 26 C24 31 19 33.5 15 33.5 C11 33.5 7 31 7 26 Z" fill="#efe9dc"/><path d="M36 26 C36 23 41 22.5 45 22.5 C49 22.5 53 23 53 26 C53 31 49 33.5 45 33.5 C41 33.5 36 31 36 26 Z" fill="#efe9dc"/><rect x="9" y="27" width="14" height="1.6" fill="#a8a090"/><rect x="38" y="27" width="14" height="1.6" fill="#a8a090"/><rect x="24" y="24" width="12" height="6" fill="#a8a498"/><rect y="31" width="60" height="5" fill="#c8c2b4"/></g><rect x="2.5" y="2.3" width="6" height="1.1" fill="#ddd"/><rect x="9" y="2.7" width="6" height=".5" fill="#888"/><rect x="2.5" y="4.2" width="3" height=".5" fill="#888"/></svg></div><div class="n" style="left:25.5px;top:437.2px">33</div><div class="s" style="left:106px;top:388.5px;"><svg style="left:0;top:0" width="60" height="42" viewBox="0 0 60 42"><defs><filter id="bl34" x="-10%" y="-10%" width="120%" height="120%"><feGaussianBlur stdDeviation="0.6"/></filter><filter id="bb34" x="-20%" y="-20%" width="140%" height="140%"><feGaussianBlur stdDeviation="1.5"/></filter><linearGradient id="w34" x1="0" y1="0" x2="0" y2="1"><stop offset="0" stop-color="#7a5a40"/><stop offset="0.35" stop-color="#a88866"/><stop offset="0.7" stop-color="#98785a"/><stop offset="1" stop-color="#6a5442"/></linearGradient><radialGradient id="k34" cx="0.5" cy="0.5" r="0.5"><stop offset="0" stop-color="#f8fafc"/><stop offset="0.6" stop-color="#eceae4"/><stop offset="0.85" stop-color="#d0bca0"/><stop offset="1" stop-color="#a88868"/></radialGradient><linearGradient id="f34" x1="0" y1="0" x2="0" y2="1"><stop offset="0" stop-color="#4a4a4c"/><stop offset="0.5" stop-color="#303032"/><stop offset="1" stop-color="#202022"/></linearGradient></defs><rect width="60" height="42" fill="url(#w34)"/><ellipse cx="30" cy="4" rx="25" ry="12.5" fill="url(#k34)"/><g stroke="#a89478" stroke-width=".45" opacity=".6"><line x1="30" y1="15" x2="5.0" y2="15.0"/><line x1="30" y1="15" x2="5.9" y2="10.6"/><line x1="30" y1="15" x2="8.3" y2="6.5"/><line x1="30" y1="15" x2="12.3" y2="3.0"/><line x1="30" y1="15" x2="17.5" y2="0.3"/><line x1="30" y1="15" x2="23.5" y2="-1.4"/><line x1="30" y1="15" x2="30.0" y2="-2.0"/><line x1="30" y1="15" x2="36.5" y2="-1.4"/><line x1="30" y1="15" x2="42.5" y2="0.3"/><line x1="30" y1="15" x2="47.7" y2="3.0"/><line x1="30" y1="15" x2="51.7" y2="6.5"/><line x1="30" y1="15" x2="54.1" y2="10.6"/><line x1="30" y1="15" x2="55.0" y2="15.0"/></g><ellipse cx="30" cy="4" rx="25" ry="12.5" fill="none" stroke="#8a6a4a" stroke-width="1.2" opacity=".6"/><path d="M0 23 Q3.5 20 7.5 24 L7.5 31 L0 31 Z" fill="#c0c4cc"/><path d="M60 23 Q56.5 20 52.5 24 L52.5 31 L60 31 Z" fill="#c0c4cc"/><rect y="30.5" width="60" height="11.5" fill="url(#f34)"/><g filter="url(#bl34)"><path d="M0 10 C12 11 22 16 34 23 C40 26 45 28 52 30 L48 33 C40 30 32 27 24 22 C15 17 8 15 0 15 Z" fill="#f6f4f0"/><ellipse cx="28" cy="33.5" rx="12" ry="2.6" fill="#ecebea"/><ellipse cx="30" cy="29.5" rx="6" ry="3.2" fill="#f0efec"/><ellipse cx="28" cy="37.5" rx="10" ry="1.6" fill="#7a7a7a" opacity=".55"/></g><rect x="14" y="28" width="1" height="4" fill="#e8e8e8"/><rect x="45" y="27" width="1" height="5" fill="#999"/></svg></div><div class="n" style="left:109.5px;top:437.2px">34</div><div class="s" style="left:190px;top:388.5px;"><svg style="left:0;top:0" width="60" height="42" viewBox="0 0 60 42"><defs><filter id="bl35" x="-10%" y="-10%" width="120%" height="120%"><feGaussianBlur stdDeviation="0.6"/></filter><filter id="bb35" x="-20%" y="-20%" width="140%" height="140%"><feGaussianBlur stdDeviation="1.5"/></filter><linearGradient id="a35" x1="0" y1="0" x2="0" y2="1"><stop offset="0" stop-color="#ece4e0"/><stop offset="0.3" stop-color="#d8c8c0"/><stop offset="0.6" stop-color="#c8a898"/><stop offset="1" stop-color="#e4dcd8"/></linearGradient><linearGradient id="b35" x1="0" y1="0" x2="0" y2="1"><stop offset="0" stop-color="#1a2850"/><stop offset="0.5" stop-color="#4868b0"/><stop offset="1" stop-color="#8098d0"/></linearGradient><linearGradient id="c35" x1="0" y1="0" x2="0" y2="1"><stop offset="0" stop-color="#08080c"/><stop offset="0.3" stop-color="#101018"/><stop offset="0.45" stop-color="#2040c0"/><stop offset="0.6" stop-color="#2848c8"/><stop offset="0.8" stop-color="#1a3090"/><stop offset="1" stop-color="#102060"/></linearGradient></defs><rect width="60" height="42" fill="#0a0c18"/><rect width="29.6" height="20.5" fill="url(#a35)"/><g filter="url(#bl35)"><ellipse cx="15" cy="11" rx="9" ry="3" fill="#f4f0ee"/><rect x="0" y="8" width="8" height="6" fill="#a87868" opacity=".7"/><rect x="22" y="7" width="7" height="6" fill="#b89088" opacity=".7"/><ellipse cx="17" cy="18" rx="10" ry="1.5" fill="#6a6060"/></g><rect y="21" width="29.6" height="21" fill="url(#b35)"/><g filter="url(#bl35)"><ellipse cx="20" cy="27" rx="6" ry="2.2" fill="none" stroke="#f0f4ff" stroke-width="1.3"/><ellipse cx="18" cy="33" rx="11" ry="4" fill="none" stroke="#a8c0f0" stroke-width="2"/><path d="M3 22 L10 30 M12 22 L6 30" stroke="#c0d0f0" stroke-width="1"/></g><rect x="30" width="30" height="42" fill="url(#c35)"/><g filter="url(#bl35)"><circle cx="46" cy="8" r="5.5" fill="none" stroke="#e8ecf4" stroke-width="1.6"/><rect x="42" y="9" width="8" height="3" fill="#e0e4f0"/><path d="M30 14 Q45 22 60 14 V24 H30 Z" fill="#3858e8"/></g></svg></div><div class="n" style="left:193.5px;top:437.2px">35</div><div class="s" style="left:274px;top:388.5px;"><svg style="left:0;top:0" width="60" height="42" viewBox="0 0 60 42"><defs><filter id="bl36" x="-10%" y="-10%" width="120%" height="120%"><feGaussianBlur stdDeviation="0.6"/></filter><filter id="bb36" x="-20%" y="-20%" width="140%" height="140%"><feGaussianBlur stdDeviation="1.5"/></filter><linearGradient id="w36" x1="0" y1="0" x2="0" y2="1"><stop offset="0" stop-color="#7a5a40"/><stop offset="0.35" stop-color="#a88866"/><stop offset="0.7" stop-color="#98785a"/><stop offset="1" stop-color="#6a5442"/></linearGradient><radialGradient id="k36" cx="0.5" cy="0.5" r="0.5"><stop offset="0" stop-color="#f8fafc"/><stop offset="0.6" stop-color="#eceae4"/><stop offset="0.85" stop-color="#d0bca0"/><stop offset="1" stop-color="#a88868"/></radialGradient><linearGradient id="f36" x1="0" y1="0" x2="0" y2="1"><stop offset="0" stop-color="#4a4a4c"/><stop offset="0.5" stop-color="#303032"/><stop offset="1" stop-color="#202022"/></linearGradient></defs><rect width="60" height="42" fill="url(#w36)"/><ellipse cx="30" cy="4" rx="25" ry="12.5" fill="url(#k36)"/><g stroke="#a89478" stroke-width=".45" opacity=".6"><line x1="30" y1="15" x2="5.0" y2="15.0"/><line x1="30" y1="15" x2="5.9" y2="10.6"/><line x1="30" y1="15" x2="8.3" y2="6.5"/><line x1="30" y1="15" x2="12.3" y2="3.0"/><line x1="30" y1="15" x2="17.5" y2="0.3"/><line x1="30" y1="15" x2="23.5" y2="-1.4"/><line x1="30" y1="15" x2="30.0" y2="-2.0"/><line x1="30" y1="15" x2="36.5" y2="-1.4"/><line x1="30" y1="15" x2="42.5" y2="0.3"/><line x1="30" y1="15" x2="47.7" y2="3.0"/><line x1="30" y1="15" x2="51.7" y2="6.5"/><line x1="30" y1="15" x2="54.1" y2="10.6"/><line x1="30" y1="15" x2="55.0" y2="15.0"/></g><ellipse cx="30" cy="4" rx="25" ry="12.5" fill="none" stroke="#8a6a4a" stroke-width="1.2" opacity=".6"/><path d="M0 23 Q3.5 20 7.5 24 L7.5 31 L0 31 Z" fill="#c0c4cc"/><path d="M60 23 Q56.5 20 52.5 24 L52.5 31 L60 31 Z" fill="#c0c4cc"/><rect y="30.5" width="60" height="11.5" fill="url(#f36)"/><g filter="url(#bl36)"><path d="M0 10 C12 11 22 16 34 23 C40 26 45 28 52 30 L48 33 C40 30 32 27 24 22 C15 17 8 15 0 15 Z" fill="#f6f4f0"/><ellipse cx="28" cy="33.5" rx="12" ry="2.6" fill="#ecebea"/><ellipse cx="30" cy="29.5" rx="6" ry="3.2" fill="#f0efec"/><ellipse cx="28" cy="37.5" rx="10" ry="1.6" fill="#7a7a7a" opacity=".55"/></g><rect x="14" y="28" width="1" height="4" fill="#e8e8e8"/><rect x="45" y="27" width="1" height="5" fill="#999"/></svg></div><div class="n" style="left:277.5px;top:437.2px">36</div><div class="s" style="left:358px;top:388.5px;"><svg style="left:0;top:0" width="60" height="42" viewBox="0 0 60 42"><defs><filter id="bl37" x="-10%" y="-10%" width="120%" height="120%"><feGaussianBlur stdDeviation="0.6"/></filter><filter id="bb37" x="-20%" y="-20%" width="140%" height="140%"><feGaussianBlur stdDeviation="1.5"/></filter><linearGradient id="w37" x1="0" y1="0" x2="0" y2="1"><stop offset="0" stop-color="#5a4a38"/><stop offset="0.5" stop-color="#a89878"/><stop offset="1" stop-color="#b8a070"/></linearGradient><radialGradient id="k37" cx="0.5" cy="0.5" r="0.5"><stop offset="0" stop-color="#ffffff"/><stop offset="0.5" stop-color="#f0f0f0"/><stop offset="0.85" stop-color="#d8d4cc"/><stop offset="1" stop-color="#a89878"/></radialGradient></defs><rect width="60" height="42" fill="url(#w37)"/><ellipse cx="30" cy="8" rx="28" ry="14" fill="url(#k37)"/><g stroke="#c8c0b0" stroke-width=".5" opacity=".7"><line x1="30" y1="17" x2="4.0" y2="17.0"/><line x1="30" y1="17" x2="4.9" y2="13.1"/><line x1="30" y1="17" x2="7.5" y2="9.5"/><line x1="30" y1="17" x2="11.6" y2="6.4"/><line x1="30" y1="17" x2="17.0" y2="4.0"/><line x1="30" y1="17" x2="23.3" y2="2.5"/><line x1="30" y1="17" x2="30.0" y2="2.0"/><line x1="30" y1="17" x2="36.7" y2="2.5"/><line x1="30" y1="17" x2="43.0" y2="4.0"/><line x1="30" y1="17" x2="48.4" y2="6.4"/><line x1="30" y1="17" x2="52.5" y2="9.5"/><line x1="30" y1="17" x2="55.1" y2="13.1"/><line x1="30" y1="17" x2="56.0" y2="17.0"/></g><g filter="url(#bl37)"><path d="M0 20 C10 24 20 26 30 27 C40 26 50 24 60 20 V30 H0 Z" fill="#6a5840" opacity=".85"/><rect x="0" y="30" width="60" height="12" fill="#b09868"/><ellipse cx="4" cy="31" rx="5" ry="7" fill="#e8e0d0"/><ellipse cx="56" cy="31" rx="5" ry="7" fill="#e8e0d0"/><rect x="25" y="24" width="10" height="11" rx="4" fill="#e8d8b8"/><rect x="28" y="26" width="4" height="6" fill="#f4f0e8"/><path d="M36 27 L50 34 L46 36 L34 30 Z" fill="#f0f0f0"/></g></svg></div><div class="n" style="left:361.5px;top:437.2px">37</div><div class="s" style="left:442px;top:388.5px;"><svg style="left:0;top:0" width="60" height="42" viewBox="0 0 60 42"><defs><filter id="bl38" x="-10%" y="-10%" width="120%" height="120%"><feGaussianBlur stdDeviation="0.6"/></filter><filter id="bb38" x="-20%" y="-20%" width="140%" height="140%"><feGaussianBlur stdDeviation="1.5"/></filter><radialGradient id="k38" cx="0.5" cy="0.4" r="0.6"><stop offset="0" stop-color="#f0ece2"/><stop offset="0.6" stop-color="#dcd8c8"/><stop offset="1" stop-color="#c0bca8"/></radialGradient><linearGradient id="f38" x1="0" y1="0" x2="0" y2="1"><stop offset="0" stop-color="#8a8878"/><stop offset="0.4" stop-color="#6a6858"/><stop offset="1" stop-color="#4a4838"/></linearGradient></defs><rect width="60" height="42" fill="#25231c"/><path d="M0 42 V22 C5 8 18 2 30 2 C42 2 55 8 60 22 V42 Z" fill="url(#k38)"/><g filter="url(#bl38)"><ellipse cx="30" cy="13" rx="17" ry="8" fill="#f6f2ea"/><ellipse cx="10" cy="27" rx="9" ry="9" fill="#ece8dc"/><rect y="31" width="60" height="11" fill="url(#f38)"/><ellipse cx="21" cy="31" rx="4" ry="3" fill="#d8d0c0"/><ellipse cx="30" cy="30" rx="3" ry="2" fill="#a89880"/><ellipse cx="44" cy="30" rx="3.5" ry="3" fill="#c8b898"/><rect x="36" y="26" width="1.2" height="6" fill="#6a6860"/></g><rect x="2.5" y="2.2" width="5" height="1.2" fill="#ddd"/><rect x="2.5" y="4.2" width="4" height=".5" fill="#999"/></svg></div><div class="n" style="left:445.5px;top:437.2px">38</div><div class="s" style="left:526px;top:388.5px;"><svg style="left:0;top:0" width="60" height="42" viewBox="0 0 60 42"><defs><filter id="bl39" x="-10%" y="-10%" width="120%" height="120%"><feGaussianBlur stdDeviation="0.6"/></filter><filter id="bb39" x="-20%" y="-20%" width="140%" height="140%"><feGaussianBlur stdDeviation="1.5"/></filter><linearGradient id="w39" x1="0" y1="0" x2="0" y2="1"><stop offset="0" stop-color="#3a3a46"/><stop offset="0.25" stop-color="#7a7a80"/><stop offset="0.55" stop-color="#8a8886"/><stop offset="0.75" stop-color="#5a5856"/><stop offset="1" stop-color="#2e2e2e"/></linearGradient></defs><rect width="60" height="42" fill="url(#w39)"/><g filter="url(#bl39)"><ellipse cx="34" cy="10" rx="17" ry="6" fill="#c8d8d0"/><ellipse cx="33" cy="9.5" rx="13" ry="5" fill="#6a9848"/><ellipse cx="30" cy="8" rx="7" ry="3" fill="#98c070"/><path d="M15 13 C18 22 48 22 52 13 L52 18 C48 26 18 26 15 18 Z" fill="#4a4440"/><path d="M2 42 C2 30 6 26 13 25 L13 28 C8 29 5 33 5 42 Z" fill="#ececec"/><path d="M20 30 C24 27 30 27 34 30 L30 32 C27 30 24 30 22 32 Z" fill="#f0f0f0"/><rect y="34" width="60" height="8" fill="#2e2e2e"/><rect x="53" y="26" width="2" height="6" fill="#d8d8d8"/></g><rect x="2.5" y="2.3" width="4" height="1.2" fill="#ddd"/></svg></div><div class="n" style="left:529.5px;top:437.2px">39</div><div class="s" style="left:610px;top:388.5px;"><div class="a" style="left:52px;top:2.6px;width:4.5px;height:0.5px;background:#aaa"></div><div class="a" style="left:27px;top:19px;width:6px;height:0.4px;background:#bbb"></div><div class="a" style="left:28px;top:20.3px;width:4px;height:0.4px;background:#ccc"></div><div class="a" style="left:3px;top:38.8px;width:7px;height:0.6px;background:#888"></div></div><div class="n" style="left:613.5px;top:437.2px">40</div><div class="s" style="left:22px;top:455.0px;"><svg style="left:0;top:0" width="60" height="42" viewBox="0 0 60 42"><defs><filter id="bl41" x="-10%" y="-10%" width="120%" height="120%"><feGaussianBlur stdDeviation="0.6"/></filter><filter id="bb41" x="-20%" y="-20%" width="140%" height="140%"><feGaussianBlur stdDeviation="1.5"/></filter><linearGradient id="g41" x1="0" y1="0" x2="0.4" y2="1"><stop offset="0" stop-color="#8a7452"/><stop offset="0.3" stop-color="#746a48"/><stop offset="0.6" stop-color="#626040"/><stop offset="1" stop-color="#4e4e30"/></linearGradient></defs><rect width="60" height="42" fill="url(#g41)"/><g filter="url(#bb41)"><rect x="12.6" y="13.1" width="3.8" height="2.0" fill="#4a4a28" opacity=".55"/><rect x="23.4" y="8.4" width="2.0" height="3.4" fill="#6a6a38" opacity=".55"/><rect x="30.5" y="21.0" width="2.4" height="3.3" fill="#5a5a30" opacity=".55"/><rect x="51.6" y="24.3" width="4.1" height="2.9" fill="#6a6a38" opacity=".55"/><rect x="18.5" y="1.8" width="2.7" height="3.1" fill="#4a4a28" opacity=".55"/><rect x="31.6" y="21.9" width="2.0" height="1.7" fill="#6a6a38" opacity=".55"/><rect x="44.5" y="6.0" width="3.8" height="1.7" fill="#9a8458" opacity=".55"/><rect x="14.1" y="14.2" width="3.9" height="1.8" fill="#b09a68" opacity=".55"/><rect x="27.4" y="13.7" width="4.7" height="2.9" fill="#9a8458" opacity=".55"/><rect x="7.3" y="8.8" width="3.6" height="2.0" fill="#b09a68" opacity=".55"/><rect x="32.5" y="9.1" width="2.3" height="2.8" fill="#9a8458" opacity=".55"/><rect x="12.6" y="1.4" width="3.3" height="1.6" fill="#5a5a30" opacity=".55"/><rect x="5.1" y="8.5" width="3.8" height="2.6" fill="#b09a68" opacity=".55"/><rect x="42.1" y="21.4" width="4.3" height="2.5" fill="#7a7040" opacity=".55"/><rect x="55.9" y="23.9" width="2.7" height="2.6" fill="#9a8458" opacity=".55"/><rect x="24.0" y="28.2" width="2.5" height="3.4" fill="#5a5a30" opacity=".55"/><rect x="21.9" y="30.6" width="2.4" height="3.1" fill="#4a4a28" opacity=".55"/><rect x="29.0" y="19.6" width="3.9" height="3.2" fill="#5a5a30" opacity=".55"/><rect x="39.6" y="10.1" width="3.5" height="1.5" fill="#9a8458" opacity=".55"/><rect x="44.6" y="11.9" width="3.7" height="2.2" fill="#7a7040" opacity=".55"/><rect x="41.9" y="25.6" width="2.7" height="3.0" fill="#b09a68" opacity=".55"/><rect x="2.6" y="8.4" width="4.3" height="3.3" fill="#6a6a38" opacity=".55"/><rect x="32.2" y="20.9" width="3.6" height="3.0" fill="#6a6a38" opacity=".55"/><rect x="6.4" y="39.1" width="2.7" height="2.6" fill="#b09a68" opacity=".55"/><rect x="8.1" y="17.2" width="4.6" height="1.8" fill="#7a7040" opacity=".55"/><rect x="22.4" y="29.6" width="3.3" height="3.0" fill="#7a7040" opacity=".55"/><rect x="26.5" y="5.1" width="3.4" height="2.9" fill="#b09a68" opacity=".55"/><rect x="29.4" y="1.9" width="4.8" height="1.6" fill="#9a8458" opacity=".55"/><rect x="44.0" y="25.5" width="3.1" height="3.0" fill="#b09a68" opacity=".55"/><rect x="56.3" y="28.4" width="3.9" height="2.6" fill="#b09a68" opacity=".55"/><rect x="47.2" y="12.3" width="2.9" height="1.6" fill="#6a6a38" opacity=".55"/><rect x="37.9" y="12.3" width="4.2" height="1.8" fill="#b09a68" opacity=".55"/><rect x="9.4" y="12.2" width="4.3" height="2.1" fill="#9a8458" opacity=".55"/><rect x="40.7" y="35.3" width="2.3" height="2.2" fill="#5a5a30" opacity=".55"/><rect x="49.5" y="21.9" width="5.0" height="1.8" fill="#b09a68" opacity=".55"/><rect x="30.5" y="30.6" width="4.0" height="2.6" fill="#4a4a28" opacity=".55"/><rect x="3.3" y="28.1" width="4.0" height="2.5" fill="#b09a68" opacity=".55"/><rect x="22.2" y="2.6" width="3.2" height="2.5" fill="#9a8458" opacity=".55"/><rect x="0.9" y="34.9" width="4.8" height="2.8" fill="#7a7040" opacity=".55"/><rect x="4.0" y="30.8" width="3.9" height="2.6" fill="#9a8458" opacity=".55"/><rect x="52.7" y="13.2" width="3.0" height="2.7" fill="#b09a68" opacity=".55"/><rect x="30.9" y="0.5" width="2.8" height="2.5" fill="#4a4a28" opacity=".55"/><rect x="46.4" y="25.0" width="4.5" height="2.7" fill="#7a7040" opacity=".55"/><rect x="35.4" y="7.1" width="4.8" height="3.2" fill="#5a5a30" opacity=".55"/><rect x="43.5" y="16.9" width="3.8" height="2.3" fill="#4a4a28" opacity=".55"/><rect x="31.8" y="9.5" width="4.1" height="2.2" fill="#7a7040" opacity=".55"/><rect x="0.7" y="21.9" width="3.7" height="3.5" fill="#7a7040" opacity=".55"/><rect x="0.5" y="34.2" width="3.5" height="2.5" fill="#b09a68" opacity=".55"/><rect x="21.7" y="21.1" width="3.1" height="3.1" fill="#9a8458" opacity=".55"/><rect x="37.4" y="36.7" width="3.5" height="2.8" fill="#6a6a38" opacity=".55"/></g><g filter="url(#bl41)"><path d="M-2 40 L60 22 L60 26 L2 43 Z" fill="#7a7468" opacity=".6"/><path d="M16 26 L28 18 L35 22 L23 30 Z" fill="#e4e0d4"/><ellipse cx="41" cy="17" rx="5.5" ry="3" fill="#e8e4d6"/><ellipse cx="51" cy="13" rx="4.5" ry="2.6" fill="#e4dfd0"/><path d="M8 33 L17 28 L20 30 L11 35 Z" fill="#c8c4b8"/><rect x="30" y="1" width="3" height="10" fill="#d8ccb0" opacity=".6"/><rect x="46" y="0" width="2.5" height="7" fill="#d8ccb0" opacity=".55"/></g></svg></div><div class="n" style="left:25.5px;top:503.7px">41</div><div class="s" style="left:106px;top:455.0px;"><svg style="left:0;top:0" width="60" height="42" viewBox="0 0 60 42"><defs><filter id="bl42" x="-10%" y="-10%" width="120%" height="120%"><feGaussianBlur stdDeviation="0.6"/></filter><filter id="bb42" x="-20%" y="-20%" width="140%" height="140%"><feGaussianBlur stdDeviation="1.5"/></filter></defs><rect width="60" height="42" fill="#dcdcd6"/><rect width="60" height=".9" fill="#f4f4f4"/><rect x="3" y="3.2" width="5" height="1.1" fill="#777"/><rect x="3" y="5.2" width="4" height=".5" fill="#bbb"/><rect x="3" y="8" width="3" height="2.2" fill="#888"/><rect x="7" y="8.5" width="3" height=".5" fill="#aaa"/><rect x="24.5" y="4.5" width="11.5" height="37" fill="#d0d0c8"/><rect x="25.5" y="6" width="8" height="8" fill="#f0f0f0"/><rect x="26" y="16" width="9" height="9" fill="#e8e8e4"/><rect x="25.5" y="28" width="7" height="6" fill="#f0f0f0"/><rect x="25.5" y="36" width="6" height="4" fill="#f4f4f4"/><rect x="33" y="17" width="3" height="5" fill="#a8a8a0"/><rect y="39.5" width="60" height="2.5" fill="#f6f6f6"/><rect x="52" y="37" width="5" height="1.5" fill="#bbb"/></svg></div><div class="n" style="left:109.5px;top:503.7px">42</div><div class="s" style="left:190px;top:455.0px;"><svg style="left:0;top:0" width="60" height="42" viewBox="0 0 60 42"><defs><filter id="bl43" x="-10%" y="-10%" width="120%" height="120%"><feGaussianBlur stdDeviation="0.6"/></filter><filter id="bb43" x="-20%" y="-20%" width="140%" height="140%"><feGaussianBlur stdDeviation="1.5"/></filter><linearGradient id="p43" x1="0" y1="0" x2="0" y2="1"><stop offset="0" stop-color="#c8d0c0"/><stop offset="0.5" stop-color="#d8dcd0"/><stop offset="1" stop-color="#e0e4dc"/></linearGradient></defs><rect x="3" y="3.2" width="3" height="1.1" fill="#777"/><rect x="3" y="5.2" width="4" height=".5" fill="#bbb"/><rect x="52" y="2.6" width="4.5" height=".5" fill="#aaa"/><rect x="3" y="38.8" width="7" height=".6" fill="#999"/><rect x="9" y="3.5" width="14" height="37" fill="url(#p43)"/><circle cx="14" cy="10.0" r="2.4" fill="#fafafa"/><circle cx="18" cy="14.8" r="2.4" fill="#fafafa"/><circle cx="14" cy="19.6" r="2.4" fill="#fafafa"/><circle cx="18" cy="24.4" r="2.4" fill="#fafafa"/><circle cx="14" cy="29.2" r="2.4" fill="#fafafa"/><circle cx="18" cy="34.0" r="2.4" fill="#fafafa"/><rect x="9" y="3" width="5" height="1" fill="#bbb"/><circle cx="38" cy="20" r="2.0" fill="none" stroke="#d07868" stroke-width="1.1"/><circle cx="42" cy="16.5" r="2.0" fill="none" stroke="#98b8d0" stroke-width="1.1"/><circle cx="43.5" cy="23" r="2.0" fill="none" stroke="#c85060" stroke-width="1.1"/><circle cx="36.5" cy="27.5" r="2.0" fill="none" stroke="#3a4a90" stroke-width="1.1"/><circle cx="39" cy="33" r="2.0" fill="none" stroke="#e0a888" stroke-width="1.1"/><circle cx="38" cy="38.5" r="2.0" fill="none" stroke="#c85060" stroke-width="1.1"/><circle cx="51.5" cy="21" r="2.0" fill="none" stroke="#d07868" stroke-width="1.1"/><circle cx="55.5" cy="18" r="2.0" fill="none" stroke="#d89090" stroke-width="1.1"/><circle cx="57" cy="24" r="2.0" fill="none" stroke="#e09878" stroke-width="1.1"/><circle cx="51.5" cy="27.5" r="2.0" fill="none" stroke="#3a4a90" stroke-width="1.1"/><circle cx="53.5" cy="32.5" r="2.0" fill="none" stroke="#c8a8b8" stroke-width="1.1"/><circle cx="50.5" cy="38" r="2.0" fill="none" stroke="#e0a888" stroke-width="1.1"/><rect x="36" y="12.5" width="3" height=".6" fill="#999"/><rect x="50" y="12.5" width="4" height=".6" fill="#999"/></svg></div><div class="n" style="left:193.5px;top:503.7px">43</div><div class="s" style="left:274px;top:455.0px;"><svg style="left:0;top:0" width="60" height="42" viewBox="0 0 60 42"><defs><filter id="bl44" x="-10%" y="-10%" width="120%" height="120%"><feGaussianBlur stdDeviation="0.6"/></filter><filter id="bb44" x="-20%" y="-20%" width="140%" height="140%"><feGaussianBlur stdDeviation="1.5"/></filter><linearGradient id="s44" x1="0" y1="0" x2="0" y2="1"><stop offset="0" stop-color="#4a7090"/><stop offset="0.4" stop-color="#88a8c0"/><stop offset="0.7" stop-color="#c0c8c8"/><stop offset="1" stop-color="#606860"/></linearGradient></defs><rect width="60" height="42" fill="#080808"/><rect y="8" width="60" height="26" fill="url(#s44)"/><g filter="url(#bl44)"><path d="M8 26 C10 21 20 20 28 22 C32 18 44 19 48 23 C52 22 58 23 60 24 V30 H8 Z" fill="#f0f0f0"/><rect x="12" y="24" width="40" height="3" fill="#c8c8c8"/><rect y="29" width="60" height="5" fill="#505a50"/><circle cx="20" cy="26.5" r="3.5" fill="#e04878" opacity=".85"/><rect x="36" y="28" width="14" height="3" fill="#6a8a50"/></g><rect x="2.5" y="2.4" width="5" height="1.1" fill="#ddd"/><rect x="2.5" y="4.3" width="3" height=".5" fill="#888"/></svg></div><div class="n" style="left:277.5px;top:503.7px">44</div><div class="s" style="left:358px;top:455.0px;"><div class="a" style="left:27px;top:18.6px;width:5px;height:0.4px;background:#aaa"></div></div><div class="n" style="left:361.5px;top:503.7px">45</div><div class="a" style="left:427px;top:450px;width:1px;height:52px;background:#c98a5a"></div><div class="a" style="left:425px;top:450px;width:5px;height:1px;background:#c98a5a"></div><div class="a" style="left:425px;top:501px;width:5px;height:1px;background:#c98a5a"></div><div class="a" style="left:756px;top:99px;width:4px;height:475px;background:#d4d4d4;border-radius:2px"></div><svg style="left:756px;top:89.5px" width="4" height="4" viewBox="0 0 4 4" fill="none" stroke="none" stroke-width="0.9" stroke-linecap="round" stroke-linejoin="round"><path d="M0.4 3 L2 0.8 L3.6 3 Z" fill="#444" stroke="none"/></svg><svg style="left:756px;top:578.5px" width="4" height="3" viewBox="0 0 4 3" fill="none" stroke="none" stroke-width="0.9" stroke-linecap="round" stroke-linejoin="round"><path d="M0.4 0.5 L2 2.6 L3.6 0.5 Z" fill="#444" stroke="none"/></svg><div class="a" style="left:763px;top:86px;width:0.8px;height:499px;background:#e0e0e0"></div><div class="a" style="left:776px;top:100.3px;width:8.5px;height:0.9px;background:#444"></div><svg style="left:775.5px;top:116px" width="10" height="9" viewBox="0 0 10 9" fill="none" stroke="#333" stroke-width="0.8" stroke-linecap="round" stroke-linejoin="round"><circle cx="2.5" cy="2" r="1.5"/><path d="M4 2 H9.5 M0.5 7 H5.5 M8.5 7 H9.5"/><circle cx="7" cy="7" r="1.5"/></svg><svg style="left:775.5px;top:139.3px" width="10" height="10" viewBox="0 0 10 10" fill="none" stroke="#333" stroke-width="0.8" stroke-linecap="round" stroke-linejoin="round"><path d="M5 0.6 L6.3 3.5 L9.4 3.8 L7 5.9 L7.8 9.2 L5 7.5 L2.2 9.2 L3 5.9 L0.6 3.8 L3.7 3.5 Z"/></svg><svg style="left:775.5px;top:163.3px" width="10" height="10" viewBox="0 0 10 10" fill="none" stroke="#333" stroke-width="0.8" stroke-linecap="round" stroke-linejoin="round"><path d="M6 2.5 V0.6 H0.6 V6 H3 M3 3 H9.4 V8 H4.5 L3.3 9.4 V8 H3 Z"/></svg><svg style="left:775.8px;top:188.8px" width="10" height="8.5" viewBox="0 0 10 8.5" fill="none" stroke="#333" stroke-width="0.8" stroke-linecap="round" stroke-linejoin="round"><path d="M3.2 0.6 C3.5 1.6 6.5 1.6 6.8 0.6 L9.4 2 L8.6 4 H7.8 M2.2 4 H1.4 L0.6 2 L3.2 0.6 M2.2 3 V7.8 H5"/><path d="M5.5 7.5 L8.5 4.5 M6.3 7.8 H9" /></svg><svg style="left:776px;top:211.8px" width="9.5" height="9" viewBox="0 0 9.5 9" fill="none" stroke="#333" stroke-width="0.8" stroke-linecap="round" stroke-linejoin="round"><path d="M2 1 L8.5 7.5 L7.5 8.5 L1 2 Z M6.5 1.5 L8 3 M7.2 0.8 V2.3 M0.8 7.2 L2.3 8.7 M1.5 6.5 V8"/></svg><svg style="left:776px;top:236px" width="10" height="10" viewBox="0 0 10 10" fill="none" stroke="#333" stroke-width="0.8" stroke-linecap="round" stroke-linejoin="round"><path d="M0.6 0.6 L3.5 1.8 L5 0.6 L9.4 0.6 V5 M0.6 0.6 V8.5 L3.5 9.4 M3.5 1.8 V9.4"/><circle cx="6.8" cy="6.8" r="1.8"/><path d="M8.1 8.1 L9.4 9.4"/></svg><svg style="left:775.3px;top:260.8px" width="10" height="10" viewBox="0 0 10 10" fill="none" stroke="#333" stroke-width="0.8" stroke-linecap="round" stroke-linejoin="round"><circle cx="5" cy="5" r="4.4"/><path d="M3.5 3.8 C3.5 2.2 6.5 2.2 6.5 3.8 C6.5 5 5 5 5 6.3"/><circle cx="5" cy="7.8" r=".35" fill="#333"/></svg><svg style="left:775.8px;top:284.6px" width="10" height="9.2" viewBox="0 0 10 9.2" fill="none" stroke="#333" stroke-width="0.8" stroke-linecap="round" stroke-linejoin="round"><path d="M3.2 0.6 C3.5 1.6 6.5 1.6 6.8 0.6 L9.4 2.2 L8.6 4.2 H7.8 V8.6 H2.2 V4.2 H1.4 L0.6 2.2 Z M4 4.5 V7 M5.5 7 H7 L5.8 5"/></svg><svg style="left:775.5px;top:311px" width="10" height="4" viewBox="0 0 10 4" fill="none" stroke="#333" stroke-width="0.8" stroke-linecap="round" stroke-linejoin="round"><circle cx="1.5" cy="1.8" r="1.1"/><circle cx="5" cy="1.8" r="1.1"/><circle cx="8.5" cy="1.8" r="1.1"/></svg><div class="a" style="left:0px;top:585px;width:796px;height:0.8px;background:#d8d8d8"></div><div class="t k" style="left:6px;top:589.2px;font-size:7.2px;color:#222;">幻灯片浏览</div><div class="a" style="left:47.5px;top:588px;width:0.8px;height:8.5px;background:#d0d0d0"></div><svg style="left:56.4px;top:588.2px" width="9.5" height="8.5" viewBox="0 0 9.5 8.5" fill="none" stroke="#333" stroke-width="0.8" stroke-linecap="round" stroke-linejoin="round"><path d="M3 0.6 C3.3 1.5 6.2 1.5 6.5 0.6 L9 2 L8.2 3.8 H7.5 V7.9 H2 V3.8 H1.3 L0.5 2 Z M4.5 7.9 L6 6.3"/></svg><div class="t k1" style="left:67.9px;top:589.0px;font-size:7.3px;color:#222;">Office 主题</div><div class="a" style="left:114.4px;top:588px;width:0.8px;height:8.5px;background:#d0d0d0"></div><svg style="left:124.5px;top:588.8px" width="6.5" height="6" viewBox="0 0 6.5 6" fill="none" stroke="none" stroke-width="0.9" stroke-linecap="round" stroke-linejoin="round"><path d="M3.25 0.3 L6.3 5.7 H0.2 Z" fill="#f0a020" stroke="none"/><path d="M3.25 2 V3.9 M3.25 4.6 V4.9" stroke="#fff" stroke-width=".7"/></svg><div class="t k1" style="left:134.9px;top:589.2px;font-size:7.3px;color:#222;">缺失字体</div><div class="a" style="left:522.5px;top:588px;width:0.8px;height:8.5px;background:#d0d0d0"></div><svg style="left:530px;top:588px" width="9.5" height="8.5" viewBox="0 0 9.5 8.5" fill="none" stroke="#333" stroke-width="0.8" stroke-linecap="round" stroke-linejoin="round"><rect x="0.6" y="0.6" width="8.3" height="7.3" rx="0.8"/><path d="M3.6 2.3 V6.2"/></svg><div class="a" style="left:547px;top:585.5px;width:14px;height:12px;background:#dadada;border-radius:1.5px"></div><svg style="left:549.8px;top:588.3px" width="8.5" height="7.5" viewBox="0 0 8.5 7.5" fill="none" stroke="#333" stroke-width="0.75" stroke-linecap="round" stroke-linejoin="round"><rect x="0.5" y="0.5" width="3" height="2.5" rx=".4"/><rect x="5" y="0.5" width="3" height="2.5" rx=".4"/><rect x="0.5" y="4.5" width="3" height="2.5" rx=".4"/><rect x="5" y="4.5" width="3" height="2.5" rx=".4"/></svg><svg style="left:569px;top:588.3px" width="9.5" height="8.3" viewBox="0 0 9.5 8.3" fill="none" stroke="#333" stroke-width="0.8" stroke-linecap="round" stroke-linejoin="round"><path d="M4.75 1.5 C3.5 0.6 1.8 0.6 0.6 1 V7.6 C1.8 7.2 3.5 7.2 4.75 8 C6 7.2 7.7 7.2 8.9 7.6 V1 C7.7 0.6 6 0.6 4.75 1.5 Z M4.75 1.5 V8"/></svg><div class="a" style="left:586px;top:588px;width:0.8px;height:8.5px;background:#d0d0d0"></div><div class="a" style="left:591.9px;top:586.9px;width:12.3px;height:10.3px;background:#e8702a;border-radius:1.5px"></div><svg style="left:595.5px;top:589px" width="5.5" height="6.5" viewBox="0 0 5.5 6.5" fill="none" stroke="none" stroke-width="0.9" stroke-linecap="round" stroke-linejoin="round"><path d="M0.5 0.5 L5 3.2 L0.5 6 Z" fill="#fff" stroke="none"/></svg><svg style="left:611.0px;top:590.8px" width="4" height="3" viewBox="0 0 4 3" fill="none" stroke="none" stroke-width="0.9" stroke-linecap="round" stroke-linejoin="round"><path d="M0.3 0.5 H3.7 L2 2.5 Z" fill="#333" stroke="none"/></svg><div class="a" style="left:622px;top:588px;width:0.8px;height:8.5px;background:#d0d0d0"></div><svg style="left:629.5px;top:588px" width="9.5" height="9" viewBox="0 0 9.5 9" fill="none" stroke="#333" stroke-width="0.8" stroke-linecap="round" stroke-linejoin="round"><path d="M0.6 2.8 V0.6 H2.8 M6.7 0.6 H8.9 V2.8 M8.9 6.2 V8.4 H6.7 M2.8 8.4 H0.6 V6.2"/><rect x="2.8" y="2.8" width="3.9" height="3.4" rx=".5"/></svg><div class="t k1" style="left:652.5px;top:587.6px;font-size:8.4px;color:#222;">25%</div><svg style="left:677.5px;top:590.8px" width="4" height="3" viewBox="0 0 4 3" fill="none" stroke="none" stroke-width="0.9" stroke-linecap="round" stroke-linejoin="round"><path d="M0.3 0.5 H3.7 L2 2.5 Z" fill="#333" stroke="none"/></svg><div class="a" style="left:690.7px;top:591.5px;width:7.3px;height:1.3px;background:#222"></div><div class="a" style="left:706.5px;top:591.8px;width:1px;height:1px;background:#555;border-radius:50%"></div><div class="a" style="left:711px;top:591.6px;width:59.5px;height:0.9px;background:#c4c4c4"></div><div class="a" style="left:709.3px;top:589.6px;width:4.2px;height:4.2px;background:#fff;border:0.9px solid #555;border-radius:50%"></div><div class="a" style="left:779.7px;top:591.3px;width:6px;height:1.3px;background:#111"></div><div class="a" style="left:782px;top:589px;width:1.3px;height:5.8px;background:#111"></div><svg style="left:0;top:0;clip-path:inset(38px 0 0 0)" width="796" height="600" viewBox="0 0 796 600"><defs><filter id="wmb"><feGaussianBlur stdDeviation="0.55"/></filter></defs><g filter="url(#wmb)"><g stroke="rgba(0,0,0,0.06)" stroke-width="5" fill="none"><polyline points="-1716.5,-38.0 -1604.0,80.0 -1491.5,188.0 -1379.0,321.0 -1266.5,438.0 -1154.0,552.0 -1041.5,668.0 -929.0,784.0"/><polyline points="-1491.5,-38.0 -1604.0,80.0 -1716.5,188.0 -1829.0,321.0 -1941.5,438.0 -2054.0,552.0 -2166.5,668.0 -2279.0,784.0"/><polyline points="-1491.5,-38.0 -1379.0,80.0 -1266.5,188.0 -1154.0,321.0 -1041.5,438.0 -929.0,552.0 -816.5,668.0 -704.0,784.0"/><polyline points="-1266.5,-38.0 -1379.0,80.0 -1491.5,188.0 -1604.0,321.0 -1716.5,438.0 -1829.0,552.0 -1941.5,668.0 -2054.0,784.0"/><polyline points="-1266.5,-38.0 -1154.0,80.0 -1041.5,188.0 -929.0,321.0 -816.5,438.0 -704.0,552.0 -591.5,668.0 -479.0,784.0"/><polyline points="-1041.5,-38.0 -1154.0,80.0 -1266.5,188.0 -1379.0,321.0 -1491.5,438.0 -1604.0,552.0 -1716.5,668.0 -1829.0,784.0"/><polyline points="-1041.5,-38.0 -929.0,80.0 -816.5,188.0 -704.0,321.0 -591.5,438.0 -479.0,552.0 -366.5,668.0 -254.0,784.0"/><polyline points="-816.5,-38.0 -929.0,80.0 -1041.5,188.0 -1154.0,321.0 -1266.5,438.0 -1379.0,552.0 -1491.5,668.0 -1604.0,784.0"/><polyline points="-816.5,-38.0 -704.0,80.0 -591.5,188.0 -479.0,321.0 -366.5,438.0 -254.0,552.0 -141.5,668.0 -29.0,784.0"/><polyline points="-591.5,-38.0 -704.0,80.0 -816.5,188.0 -929.0,321.0 -1041.5,438.0 -1154.0,552.0 -1266.5,668.0 -1379.0,784.0"/><polyline points="-591.5,-38.0 -479.0,80.0 -366.5,188.0 -254.0,321.0 -141.5,438.0 -29.0,552.0 83.5,668.0 196.0,784.0"/><polyline points="-366.5,-38.0 -479.0,80.0 -591.5,188.0 -704.0,321.0 -816.5,438.0 -929.0,552.0 -1041.5,668.0 -1154.0,784.0"/><polyline points="-366.5,-38.0 -254.0,80.0 -141.5,188.0 -29.0,321.0 83.5,438.0 196.0,552.0 308.5,668.0 421.0,784.0"/><polyline points="-141.5,-38.0 -254.0,80.0 -366.5,188.0 -479.0,321.0 -591.5,438.0 -704.0,552.0 -816.5,668.0 -929.0,784.0"/><polyline points="-141.5,-38.0 -29.0,80.0 83.5,188.0 196.0,321.0 308.5,438.0 421.0,552.0 533.5,668.0 646.0,784.0"/><polyline points="83.5,-38.0 -29.0,80.0 -141.5,188.0 -254.0,321.0 -366.5,438.0 -479.0,552.0 -591.5,668.0 -704.0,784.0"/><polyline points="83.5,-38.0 196.0,80.0 308.5,188.0 421.0,321.0 533.5,438.0 646.0,552.0 758.5,668.0 871.0,784.0"/><polyline points="308.5,-38.0 196.0,80.0 83.5,188.0 -29.0,321.0 -141.5,438.0 -254.0,552.0 -366.5,668.0 -479.0,784.0"/><polyline points="308.5,-38.0 421.0,80.0 533.5,188.0 646.0,321.0 758.5,438.0 871.0,552.0 983.5,668.0 1096.0,784.0"/><polyline points="533.5,-38.0 421.0,80.0 308.5,188.0 196.0,321.0 83.5,438.0 -29.0,552.0 -141.5,668.0 -254.0,784.0"/><polyline points="533.5,-38.0 646.0,80.0 758.5,188.0 871.0,321.0 983.5,438.0 1096.0,552.0 1208.5,668.0 1321.0,784.0"/><polyline points="758.5,-38.0 646.0,80.0 533.5,188.0 421.0,321.0 308.5,438.0 196.0,552.0 83.5,668.0 -29.0,784.0"/><polyline points="758.5,-38.0 871.0,80.0 983.5,188.0 1096.0,321.0 1208.5,438.0 1321.0,552.0 1433.5,668.0 1546.0,784.0"/><polyline points="983.5,-38.0 871.0,80.0 758.5,188.0 646.0,321.0 533.5,438.0 421.0,552.0 308.5,668.0 196.0,784.0"/><polyline points="983.5,-38.0 1096.0,80.0 1208.5,188.0 1321.0,321.0 1433.5,438.0 1546.0,552.0 1658.5,668.0 1771.0,784.0"/><polyline points="1208.5,-38.0 1096.0,80.0 983.5,188.0 871.0,321.0 758.5,438.0 646.0,552.0 533.5,668.0 421.0,784.0"/><polyline points="1208.5,-38.0 1321.0,80.0 1433.5,188.0 1546.0,321.0 1658.5,438.0 1771.0,552.0 1883.5,668.0 1996.0,784.0"/><polyline points="1433.5,-38.0 1321.0,80.0 1208.5,188.0 1096.0,321.0 983.5,438.0 871.0,552.0 758.5,668.0 646.0,784.0"/><polyline points="1433.5,-38.0 1546.0,80.0 1658.5,188.0 1771.0,321.0 1883.5,438.0 1996.0,552.0 2108.5,668.0 2221.0,784.0"/><polyline points="1658.5,-38.0 1546.0,80.0 1433.5,188.0 1321.0,321.0 1208.5,438.0 1096.0,552.0 983.5,668.0 871.0,784.0"/><polyline points="1658.5,-38.0 1771.0,80.0 1883.5,188.0 1996.0,321.0 2108.5,438.0 2221.0,552.0 2333.5,668.0 2446.0,784.0"/><polyline points="1883.5,-38.0 1771.0,80.0 1658.5,188.0 1546.0,321.0 1433.5,438.0 1321.0,552.0 1208.5,668.0 1096.0,784.0"/></g><g stroke="rgba(255,255,255,0.75)" stroke-width="3" fill="none"><polyline points="-1716.5,-38.0 -1604.0,80.0 -1491.5,188.0 -1379.0,321.0 -1266.5,438.0 -1154.0,552.0 -1041.5,668.0 -929.0,784.0"/><polyline points="-1491.5,-38.0 -1604.0,80.0 -1716.5,188.0 -1829.0,321.0 -1941.5,438.0 -2054.0,552.0 -2166.5,668.0 -2279.0,784.0"/><polyline points="-1491.5,-38.0 -1379.0,80.0 -1266.5,188.0 -1154.0,321.0 -1041.5,438.0 -929.0,552.0 -816.5,668.0 -704.0,784.0"/><polyline points="-1266.5,-38.0 -1379.0,80.0 -1491.5,188.0 -1604.0,321.0 -1716.5,438.0 -1829.0,552.0 -1941.5,668.0 -2054.0,784.0"/><polyline points="-1266.5,-38.0 -1154.0,80.0 -1041.5,188.0 -929.0,321.0 -816.5,438.0 -704.0,552.0 -591.5,668.0 -479.0,784.0"/><polyline points="-1041.5,-38.0 -1154.0,80.0 -1266.5,188.0 -1379.0,321.0 -1491.5,438.0 -1604.0,552.0 -1716.5,668.0 -1829.0,784.0"/><polyline points="-1041.5,-38.0 -929.0,80.0 -816.5,188.0 -704.0,321.0 -591.5,438.0 -479.0,552.0 -366.5,668.0 -254.0,784.0"/><polyline points="-816.5,-38.0 -929.0,80.0 -1041.5,188.0 -1154.0,321.0 -1266.5,438.0 -1379.0,552.0 -1491.5,668.0 -1604.0,784.0"/><polyline points="-816.5,-38.0 -704.0,80.0 -591.5,188.0 -479.0,321.0 -366.5,438.0 -254.0,552.0 -141.5,668.0 -29.0,784.0"/><polyline points="-591.5,-38.0 -704.0,80.0 -816.5,188.0 -929.0,321.0 -1041.5,438.0 -1154.0,552.0 -1266.5,668.0 -1379.0,784.0"/><polyline points="-591.5,-38.0 -479.0,80.0 -366.5,188.0 -254.0,321.0 -141.5,438.0 -29.0,552.0 83.5,668.0 196.0,784.0"/><polyline points="-366.5,-38.0 -479.0,80.0 -591.5,188.0 -704.0,321.0 -816.5,438.0 -929.0,552.0 -1041.5,668.0 -1154.0,784.0"/><polyline points="-366.5,-38.0 -254.0,80.0 -141.5,188.0 -29.0,321.0 83.5,438.0 196.0,552.0 308.5,668.0 421.0,784.0"/><polyline points="-141.5,-38.0 -254.0,80.0 -366.5,188.0 -479.0,321.0 -591.5,438.0 -704.0,552.0 -816.5,668.0 -929.0,784.0"/><polyline points="-141.5,-38.0 -29.0,80.0 83.5,188.0 196.0,321.0 308.5,438.0 421.0,552.0 533.5,668.0 646.0,784.0"/><polyline points="83.5,-38.0 -29.0,80.0 -141.5,188.0 -254.0,321.0 -366.5,438.0 -479.0,552.0 -591.5,668.0 -704.0,784.0"/><polyline points="83.5,-38.0 196.0,80.0 308.5,188.0 421.0,321.0 533.5,438.0 646.0,552.0 758.5,668.0 871.0,784.0"/><polyline points="308.5,-38.0 196.0,80.0 83.5,188.0 -29.0,321.0 -141.5,438.0 -254.0,552.0 -366.5,668.0 -479.0,784.0"/><polyline points="308.5,-38.0 421.0,80.0 533.5,188.0 646.0,321.0 758.5,438.0 871.0,552.0 983.5,668.0 1096.0,784.0"/><polyline points="533.5,-38.0 421.0,80.0 308.5,188.0 196.0,321.0 83.5,438.0 -29.0,552.0 -141.5,668.0 -254.0,784.0"/><polyline points="533.5,-38.0 646.0,80.0 758.5,188.0 871.0,321.0 983.5,438.0 1096.0,552.0 1208.5,668.0 1321.0,784.0"/><polyline points="758.5,-38.0 646.0,80.0 533.5,188.0 421.0,321.0 308.5,438.0 196.0,552.0 83.5,668.0 -29.0,784.0"/><polyline points="758.5,-38.0 871.0,80.0 983.5,188.0 1096.0,321.0 1208.5,438.0 1321.0,552.0 1433.5,668.0 1546.0,784.0"/><polyline points="983.5,-38.0 871.0,80.0 758.5,188.0 646.0,321.0 533.5,438.0 421.0,552.0 308.5,668.0 196.0,784.0"/><polyline points="983.5,-38.0 1096.0,80.0 1208.5,188.0 1321.0,321.0 1433.5,438.0 1546.0,552.0 1658.5,668.0 1771.0,784.0"/><polyline points="1208.5,-38.0 1096.0,80.0 983.5,188.0 871.0,321.0 758.5,438.0 646.0,552.0 533.5,668.0 421.0,784.0"/><polyline points="1208.5,-38.0 1321.0,80.0 1433.5,188.0 1546.0,321.0 1658.5,438.0 1771.0,552.0 1883.5,668.0 1996.0,784.0"/><polyline points="1433.5,-38.0 1321.0,80.0 1208.5,188.0 1096.0,321.0 983.5,438.0 871.0,552.0 758.5,668.0 646.0,784.0"/><polyline points="1433.5,-38.0 1546.0,80.0 1658.5,188.0 1771.0,321.0 1883.5,438.0 1996.0,552.0 2108.5,668.0 2221.0,784.0"/><polyline points="1658.5,-38.0 1546.0,80.0 1433.5,188.0 1321.0,321.0 1208.5,438.0 1096.0,552.0 983.5,668.0 871.0,784.0"/><polyline points="1658.5,-38.0 1771.0,80.0 1883.5,188.0 1996.0,321.0 2108.5,438.0 2221.0,552.0 2333.5,668.0 2446.0,784.0"/><polyline points="1883.5,-38.0 1771.0,80.0 1658.5,188.0 1546.0,321.0 1433.5,438.0 1321.0,552.0 1208.5,668.0 1096.0,784.0"/></g></g></svg><div class="t" style="left:-69.0px;top:72.0px;width:80px;text-align:center;font-size:16px;font-weight:bold;color:rgba(255,255,255,.8);text-shadow:0 0 1.2px rgba(0,0,0,.22);transform:rotate(-43.8deg)">yitu.cn</div><div class="t" style="left:71.5px;top:61.5px;font-size:26px;font-weight:bold;color:rgba(255,255,255,.85);text-shadow:0 0 1.5px rgba(0,0,0,.25),0 0 .5px rgba(0,0,0,.15)">易</div><div class="t" style="left:156.0px;top:72.0px;width:80px;text-align:center;font-size:16px;font-weight:bold;color:rgba(255,255,255,.8);text-shadow:0 0 1.2px rgba(0,0,0,.22);transform:rotate(43.8deg)">yitu.cn</div><div class="t" style="left:296.5px;top:70.5px;font-size:26px;font-weight:bold;color:rgba(255,255,255,.85);text-shadow:0 0 1.5px rgba(0,0,0,.25),0 0 .5px rgba(0,0,0,.15)">易</div><div class="t" style="left:381.0px;top:72.0px;width:80px;text-align:center;font-size:16px;font-weight:bold;color:rgba(255,255,255,.8);text-shadow:0 0 1.2px rgba(0,0,0,.22);transform:rotate(-43.8deg)">yitu.cn</div><div class="t" style="left:521.5px;top:70.5px;font-size:26px;font-weight:bold;color:rgba(255,255,255,.85);text-shadow:0 0 1.5px rgba(0,0,0,.25),0 0 .5px rgba(0,0,0,.15)">易</div><div class="t" style="left:606.0px;top:72.0px;width:80px;text-align:center;font-size:16px;font-weight:bold;color:rgba(255,255,255,.8);text-shadow:0 0 1.2px rgba(0,0,0,.22);transform:rotate(43.8deg)">yitu.cn</div><div class="t" style="left:746.5px;top:70.5px;font-size:26px;font-weight:bold;color:rgba(255,255,255,.85);text-shadow:0 0 1.5px rgba(0,0,0,.25),0 0 .5px rgba(0,0,0,.15)">易</div><div class="t" style="left:-41.0px;top:184.5px;font-size:26px;font-weight:bold;color:rgba(255,255,255,.85);text-shadow:0 0 1.5px rgba(0,0,0,.25),0 0 .5px rgba(0,0,0,.15)">易</div><div class="t" style="left:43.5px;top:180.0px;width:80px;text-align:center;font-size:16px;font-weight:bold;color:rgba(255,255,255,.8);text-shadow:0 0 1.2px rgba(0,0,0,.22);transform:rotate(49.8deg)">yitu.cn</div><div class="t" style="left:268.5px;top:180.0px;width:80px;text-align:center;font-size:16px;font-weight:bold;color:rgba(255,255,255,.8);text-shadow:0 0 1.2px rgba(0,0,0,.22);transform:rotate(-49.8deg)">yitu.cn</div><div class="t" style="left:409.0px;top:193.5px;font-size:26px;font-weight:bold;color:rgba(255,255,255,.85);text-shadow:0 0 1.5px rgba(0,0,0,.25),0 0 .5px rgba(0,0,0,.15)">易</div><div class="t" style="left:493.5px;top:180.0px;width:80px;text-align:center;font-size:16px;font-weight:bold;color:rgba(255,255,255,.8);text-shadow:0 0 1.2px rgba(0,0,0,.22);transform:rotate(49.8deg)">yitu.cn</div><div class="t" style="left:634.0px;top:193.5px;font-size:26px;font-weight:bold;color:rgba(255,255,255,.85);text-shadow:0 0 1.5px rgba(0,0,0,.25),0 0 .5px rgba(0,0,0,.15)">易</div><div class="t" style="left:718.5px;top:180.0px;width:80px;text-align:center;font-size:16px;font-weight:bold;color:rgba(255,255,255,.8);text-shadow:0 0 1.2px rgba(0,0,0,.22);transform:rotate(-49.8deg)">yitu.cn</div><div class="t" style="left:-69.0px;top:313.0px;width:80px;text-align:center;font-size:16px;font-weight:bold;color:rgba(255,255,255,.8);text-shadow:0 0 1.2px rgba(0,0,0,.22);transform:rotate(46.1deg)">yitu.cn</div><div class="t" style="left:71.5px;top:299.5px;font-size:26px;font-weight:bold;color:rgba(255,255,255,.85);text-shadow:0 0 1.5px rgba(0,0,0,.25),0 0 .5px rgba(0,0,0,.15)">易</div><div class="t" style="left:156.0px;top:313.0px;width:80px;text-align:center;font-size:16px;font-weight:bold;color:rgba(255,255,255,.8);text-shadow:0 0 1.2px rgba(0,0,0,.22);transform:rotate(-46.1deg)">yitu.cn</div><div class="t" style="left:296.5px;top:308.5px;font-size:26px;font-weight:bold;color:rgba(255,255,255,.85);text-shadow:0 0 1.5px rgba(0,0,0,.25),0 0 .5px rgba(0,0,0,.15)">易</div><div class="t" style="left:381.0px;top:313.0px;width:80px;text-align:center;font-size:16px;font-weight:bold;color:rgba(255,255,255,.8);text-shadow:0 0 1.2px rgba(0,0,0,.22);transform:rotate(46.1deg)">yitu.cn</div><div class="t" style="left:521.5px;top:308.5px;font-size:26px;font-weight:bold;color:rgba(255,255,255,.85);text-shadow:0 0 1.5px rgba(0,0,0,.25),0 0 .5px rgba(0,0,0,.15)">易</div><div class="t" style="left:606.0px;top:313.0px;width:80px;text-align:center;font-size:16px;font-weight:bold;color:rgba(255,255,255,.8);text-shadow:0 0 1.2px rgba(0,0,0,.22);transform:rotate(-46.1deg)">yitu.cn</div><div class="t" style="left:746.5px;top:308.5px;font-size:26px;font-weight:bold;color:rgba(255,255,255,.85);text-shadow:0 0 1.5px rgba(0,0,0,.25),0 0 .5px rgba(0,0,0,.15)">易</div><div class="t" style="left:-41.0px;top:418.5px;font-size:26px;font-weight:bold;color:rgba(255,255,255,.85);text-shadow:0 0 1.5px rgba(0,0,0,.25),0 0 .5px rgba(0,0,0,.15)">易</div><div class="t" style="left:43.5px;top:430.0px;width:80px;text-align:center;font-size:16px;font-weight:bold;color:rgba(255,255,255,.8);text-shadow:0 0 1.2px rgba(0,0,0,.22);transform:rotate(-45.4deg)">yitu.cn</div><div class="t" style="left:184.0px;top:427.5px;font-size:26px;font-weight:bold;color:rgba(255,255,255,.85);text-shadow:0 0 1.5px rgba(0,0,0,.25),0 0 .5px rgba(0,0,0,.15)">易</div><div class="t" style="left:268.5px;top:430.0px;width:80px;text-align:center;font-size:16px;font-weight:bold;color:rgba(255,255,255,.8);text-shadow:0 0 1.2px rgba(0,0,0,.22);transform:rotate(45.4deg)">yitu.cn</div><div class="t" style="left:409.0px;top:427.5px;font-size:26px;font-weight:bold;color:rgba(255,255,255,.85);text-shadow:0 0 1.5px rgba(0,0,0,.25),0 0 .5px rgba(0,0,0,.15)">易</div><div class="t" style="left:493.5px;top:430.0px;width:80px;text-align:center;font-size:16px;font-weight:bold;color:rgba(255,255,255,.8);text-shadow:0 0 1.2px rgba(0,0,0,.22);transform:rotate(-45.4deg)">yitu.cn</div><div class="t" style="left:634.0px;top:427.5px;font-size:26px;font-weight:bold;color:rgba(255,255,255,.85);text-shadow:0 0 1.5px rgba(0,0,0,.25),0 0 .5px rgba(0,0,0,.15)">易</div><div class="t" style="left:718.5px;top:430.0px;width:80px;text-align:center;font-size:16px;font-weight:bold;color:rgba(255,255,255,.8);text-shadow:0 0 1.2px rgba(0,0,0,.22);transform:rotate(45.4deg)">yitu.cn</div><div class="t" style="left:-69.0px;top:544.0px;width:80px;text-align:center;font-size:16px;font-weight:bold;color:rgba(255,255,255,.8);text-shadow:0 0 1.2px rgba(0,0,0,.22);transform:rotate(-45.9deg)">yitu.cn</div><div class="t" style="left:71.5px;top:533.5px;font-size:26px;font-weight:bold;color:rgba(255,255,255,.85);text-shadow:0 0 1.5px rgba(0,0,0,.25),0 0 .5px rgba(0,0,0,.15)">易</div><div class="t" style="left:156.0px;top:544.0px;width:80px;text-align:center;font-size:16px;font-weight:bold;color:rgba(255,255,255,.8);text-shadow:0 0 1.2px rgba(0,0,0,.22);transform:rotate(45.9deg)">yitu.cn</div><div class="t" style="left:296.5px;top:542.5px;font-size:26px;font-weight:bold;color:rgba(255,255,255,.85);text-shadow:0 0 1.5px rgba(0,0,0,.25),0 0 .5px rgba(0,0,0,.15)">易</div><div class="t" style="left:381.0px;top:544.0px;width:80px;text-align:center;font-size:16px;font-weight:bold;color:rgba(255,255,255,.8);text-shadow:0 0 1.2px rgba(0,0,0,.22);transform:rotate(-45.9deg)">yitu.cn</div><div class="t" style="left:521.5px;top:542.5px;font-size:26px;font-weight:bold;color:rgba(255,255,255,.85);text-shadow:0 0 1.5px rgba(0,0,0,.25),0 0 .5px rgba(0,0,0,.15)">易</div><div class="t" style="left:606.0px;top:544.0px;width:80px;text-align:center;font-size:16px;font-weight:bold;color:rgba(255,255,255,.8);text-shadow:0 0 1.2px rgba(0,0,0,.22);transform:rotate(45.9deg)">yitu.cn</div><div class="t" style="left:746.5px;top:542.5px;font-size:26px;font-weight:bold;color:rgba(255,255,255,.85);text-shadow:0 0 1.5px rgba(0,0,0,.25),0 0 .5px rgba(0,0,0,.15)">易</div><div class="t" style="left:-41.0px;top:649.5px;font-size:26px;font-weight:bold;color:rgba(255,255,255,.85);text-shadow:0 0 1.5px rgba(0,0,0,.25),0 0 .5px rgba(0,0,0,.15)">易</div><div class="t" style="left:43.5px;top:660.0px;width:80px;text-align:center;font-size:16px;font-weight:bold;color:rgba(255,255,255,.8);text-shadow:0 0 1.2px rgba(0,0,0,.22);transform:rotate(45.9deg)">yitu.cn</div><div class="t" style="left:184.0px;top:658.5px;font-size:26px;font-weight:bold;color:rgba(255,255,255,.85);text-shadow:0 0 1.5px rgba(0,0,0,.25),0 0 .5px rgba(0,0,0,.15)">易</div><div class="t" style="left:268.5px;top:660.0px;width:80px;text-align:center;font-size:16px;font-weight:bold;color:rgba(255,255,255,.8);text-shadow:0 0 1.2px rgba(0,0,0,.22);transform:rotate(-45.9deg)">yitu.cn</div><div class="t" style="left:409.0px;top:658.5px;font-size:26px;font-weight:bold;color:rgba(255,255,255,.85);text-shadow:0 0 1.5px rgba(0,0,0,.25),0 0 .5px rgba(0,0,0,.15)">易</div><div class="t" style="left:493.5px;top:660.0px;width:80px;text-align:center;font-size:16px;font-weight:bold;color:rgba(255,255,255,.8);text-shadow:0 0 1.2px rgba(0,0,0,.22);transform:rotate(45.9deg)">yitu.cn</div><div class="t" style="left:634.0px;top:658.5px;font-size:26px;font-weight:bold;color:rgba(255,255,255,.85);text-shadow:0 0 1.5px rgba(0,0,0,.25),0 0 .5px rgba(0,0,0,.15)">易</div><div class="t" style="left:718.5px;top:660.0px;width:80px;text-align:center;font-size:16px;font-weight:bold;color:rgba(255,255,255,.8);text-shadow:0 0 1.2px rgba(0,0,0,.22);transform:rotate(-45.9deg)">yitu.cn</div><div class="t" style="left:591px;top:489.5px;font-size:48px;font-weight:bold;color:rgba(255,255,255,.8);text-shadow:0 0 1.5px rgba(0,0,0,.2)">易图网</div></div></body></html>
